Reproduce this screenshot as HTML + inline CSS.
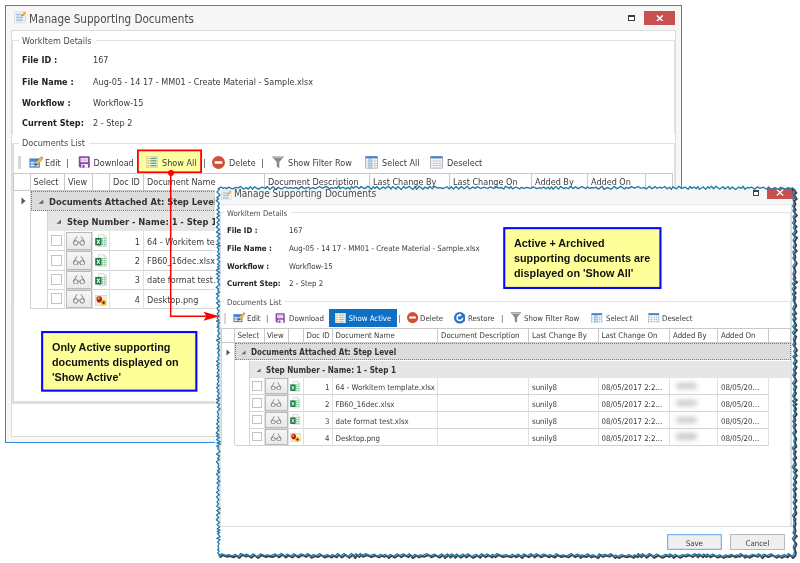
<!DOCTYPE html>
<html><head><meta charset="utf-8"><title>Manage Supporting Documents</title>
<style>
html,body{margin:0;padding:0;background:#fff;}
body{width:800px;height:563px;position:relative;overflow:hidden;font-family:'DejaVu Sans Condensed','Liberation Sans',sans-serif;}
#root{position:absolute;left:0;top:0;width:800px;height:563px;will-change:transform;}
.b{position:absolute;box-sizing:border-box;}
.t{position:absolute;white-space:nowrap;font-family:'DejaVu Sans Condensed','Liberation Sans',sans-serif;}
</style></head><body><div id="root">
<div class="b" style="left:5px;top:5px;width:677px;height:437.5px;border:1px solid #2f8bd9;background:#f7f7f7"></div>
<svg class="b" style="left:14.20px;top:11.20px" width="12.60" height="12.40" viewBox="0 0 17 16"><rect x="0.6" y="0.8" width="15" height="14.6" rx="1.2" fill="#f3f3f3" stroke="#d2d2d2" stroke-width="1"/><rect x="2.8" y="3.4" width="7" height="2.3" fill="#a6c3e6"/><rect x="2.8" y="7.2" width="9.4" height="2.3" fill="#a6c3e6"/><rect x="2.8" y="11" width="9.4" height="2.3" fill="#a6c3e6"/><path d="M10.2 6.6 L11 3.8 L14.6 0.2 L16.8 2.4 L13.2 6 Z" fill="#f2b040"/><path d="M10.2 6.6 L10.8 4.4 L12.4 6 Z" fill="#555"/></svg>
<div class="t" style="top:11.20px;font-size:11.6px;line-height:16px;color:#4a4a4a;left:29.00px;">Manage Supporting Documents</div>
<div class="b" style="left:627.50px;top:15.00px;width:7.50px;height:6.00px;border:1px solid #3c3c3c;border-top:2px solid #3c3c3c;box-sizing:border-box;background:#fff;"></div>
<div class="b" style="left:644.00px;top:11.00px;width:31.00px;height:14.00px;background:#c75050;"></div>
<svg class="b" style="left:656px;top:14.8px" width="7.6" height="6.6" viewBox="0 0 9 8" preserveAspectRatio="none"><path d="M1 0.5 L8 7.5 M8 0.5 L1 7.5" stroke="#fff" stroke-width="1.7"/></svg>
<div class="b" style="left:11.00px;top:30.00px;width:665.00px;height:407.00px;background:#fff;border:1px solid #dcdcdc;box-sizing:border-box;"></div>
<div class="b" style="left:12.00px;top:40.00px;width:663.00px;height:94.00px;border:1px solid #e2e2e2;border-bottom:none;box-sizing:border-box;"></div>
<div class="t" style="top:34.30px;font-size:9px;line-height:14px;color:#4a4a4a;left:19.00px;background:#fff;padding:0 4px 0 3px;">WorkItem Details</div>
<div class="t" style="top:53.20px;font-size:9px;line-height:14px;color:#222;left:22.00px;font-weight:bold;">File ID :</div>
<div class="t" style="top:53.20px;font-size:9px;line-height:14px;color:#3a3a3a;left:93.00px;">167</div>
<div class="t" style="top:74.80px;font-size:9px;line-height:14px;color:#222;left:22.00px;font-weight:bold;">File Name :</div>
<div class="t" style="top:74.80px;font-size:9px;line-height:14px;color:#3a3a3a;left:93.00px;">Aug-05 - 14 17 - MM01 - Create Material - Sample.xlsx</div>
<div class="t" style="top:96.00px;font-size:9px;line-height:14px;color:#222;left:22.00px;font-weight:bold;">Workflow :</div>
<div class="t" style="top:96.00px;font-size:9px;line-height:14px;color:#3a3a3a;left:93.00px;">Workflow-15</div>
<div class="t" style="top:115.60px;font-size:9px;line-height:14px;color:#222;left:22.00px;font-weight:bold;">Current Step:</div>
<div class="t" style="top:115.60px;font-size:9px;line-height:14px;color:#3a3a3a;left:93.00px;">2 - Step 2</div>
<div class="b" style="left:12.00px;top:143.00px;width:663.00px;height:261.00px;border:1px solid #e2e2e2;border-left:2px solid #dedede;border-bottom:3px solid #dedede;box-sizing:border-box;"></div>
<div class="t" style="top:135.90px;font-size:9px;line-height:14px;color:#4a4a4a;left:19.00px;background:#fff;padding:0 4px 0 3px;">Documents List</div>
<div class="b" style="left:18.40px;top:155.60px;width:2.20px;height:13.00px;background:#d6d6d6;"></div>
<svg class="b" style="left:28.50px;top:155.50px" width="14.50" height="13.00" viewBox="0 0 18 16"><defs><linearGradient id="ge" x1="0" y1="0" x2="0" y2="1"><stop offset="0" stop-color="#3f7fe0"/><stop offset="1" stop-color="#5d8fd0"/></linearGradient></defs><rect x="0.5" y="3" width="13" height="11.5" fill="url(#ge)"/><rect x="2" y="7" width="4" height="2.2" fill="#e8f0fb"/><rect x="7" y="7" width="5" height="2.2" fill="#e8f0fb"/><rect x="2" y="10.5" width="4" height="2.2" fill="#e8f0fb"/><rect x="7" y="10.5" width="5" height="2.2" fill="#e8f0fb"/><path d="M7.5 11.8 L8.2 8.6 L14 1.8 L16.6 4 L10.8 10.8 Z" fill="#f0c24a" stroke="#8a6a2a" stroke-width="0.5"/><path d="M14 1.8 L15.2 0.5 Q16.6 0.2 17.6 1.6 L17.8 2.6 L16.6 4 Z" fill="#e8847a"/><path d="M7.5 11.8 L8.2 8.6 L10.8 10.8 Z" fill="#3a3a3a"/></svg>
<div class="t" style="top:156.10px;font-size:9px;line-height:14px;color:#3a3a3a;left:45.00px;">Edit</div>
<div class="t" style="top:156.10px;font-size:9px;line-height:14px;color:#3a3a3a;left:66.00px;">|</div>
<svg class="b" style="left:77.60px;top:156.00px" width="12.50" height="12.50" viewBox="0 0 17 17"><path d="M1 1.5 Q1 0.5 2 0.5 L15 0.5 Q16 0.5 16 1.5 L16 15 Q16 16 15 16 L3 16 L1 14 Z" fill="#8e44ad"/><rect x="3.5" y="2.5" width="10" height="6" fill="#f3eef7"/><rect x="4.5" y="3.6" width="8" height="1.2" fill="#b9b9b9"/><rect x="4.5" y="6" width="8" height="1.2" fill="#b9b9b9"/><rect x="4.5" y="11" width="9" height="5" fill="#fff"/><rect x="6" y="12.2" width="3" height="3.8" fill="#8e44ad"/></svg>
<div class="t" style="top:156.10px;font-size:9px;line-height:14px;color:#3a3a3a;left:93.50px;">Download</div>
<svg class="b" style="left:0;top:0" width="800" height="563" viewBox="0 0 800 563"><rect x="137.90" y="150.40" width="63.20" height="21.90" fill="#ffffa3" stroke="#ff0000" stroke-width="1.8"/></svg>
<svg class="b" style="left:146.00px;top:156.00px" width="12.00" height="12.00" viewBox="0 0 16 16"><rect x="0.5" y="0.5" width="15" height="15" fill="#f5f0c8" stroke="#d8d3a6"/><rect x="2" y="2.1" width="2.4" height="2" fill="#f2c43c"/><rect x="6" y="2.4" width="8" height="1.4" fill="#3d8f88"/><rect x="2" y="5.3999999999999995" width="2.4" height="2" fill="#f2c43c"/><rect x="6" y="5.7" width="8" height="1.4" fill="#3d8f88"/><rect x="2" y="8.7" width="2.4" height="2" fill="#f2c43c"/><rect x="6" y="9.0" width="8" height="1.4" fill="#3d8f88"/><rect x="2" y="12.0" width="2.4" height="2" fill="#f2c43c"/><rect x="6" y="12.3" width="8" height="1.4" fill="#3d8f88"/></svg>
<div class="t" style="top:156.10px;font-size:9px;line-height:14px;color:#3a3a3a;left:162.00px;">Show All</div>
<div class="t" style="top:156.10px;font-size:9px;line-height:14px;color:#3a3a3a;left:203.00px;">|</div>
<svg class="b" style="left:212.20px;top:155.50px" width="13.00" height="13.00" viewBox="0 0 16 16"><circle cx="8" cy="8" r="8" fill="#cf5238"/><rect x="3.2" y="6.6" width="9.6" height="2.8" rx="0.6" fill="#fff"/></svg>
<div class="t" style="top:156.10px;font-size:9px;line-height:14px;color:#3a3a3a;left:229.00px;">Delete</div>
<div class="t" style="top:156.10px;font-size:9px;line-height:14px;color:#3a3a3a;left:261.00px;">|</div>
<svg class="b" style="left:271.00px;top:155.70px" width="14.00" height="13.00" viewBox="0 0 16 16"><path d="M0.5 0.5 L15.5 0.5 L9.6 7.5 L9.6 15 L6.4 13 L6.4 7.5 Z" fill="#8a8a8a"/><path d="M2.6 1.5 L13.4 1.5 L12.5 2.6 L3.5 2.6 Z" fill="#c9c9c9"/></svg>
<div class="t" style="top:156.10px;font-size:9px;line-height:14px;color:#3a3a3a;left:288.00px;">Show Filter Row</div>
<svg class="b" style="left:365.00px;top:156.00px" width="13.00" height="12.50" viewBox="0 0 16 16"><rect x="0.5" y="0.5" width="15" height="15" fill="#fff" stroke="#9aa3ad"/><rect x="0.5" y="0.5" width="15" height="2.6" fill="#3f7fd0"/><rect x="4.6" y="3.1" width="3.6" height="12.4" fill="#bfe0f6" stroke="#5aa0d8" stroke-width="0.6"/><rect x="4.4" y="3" width="0.8" height="12.5" fill="#b4bbc3"/><rect x="8.2" y="3" width="0.8" height="12.5" fill="#b4bbc3"/><rect x="12" y="3" width="0.8" height="12.5" fill="#b4bbc3"/><rect x="0.5" y="6" width="15" height="0.8" fill="#b4bbc3"/><rect x="0.5" y="9" width="15" height="0.8" fill="#b4bbc3"/><rect x="0.5" y="12" width="15" height="0.8" fill="#b4bbc3"/></svg>
<div class="t" style="top:156.10px;font-size:9px;line-height:14px;color:#3a3a3a;left:382.00px;">Select All</div>
<svg class="b" style="left:430.00px;top:156.00px" width="13.00" height="12.50" viewBox="0 0 16 16"><rect x="0.5" y="0.5" width="15" height="15" fill="#fff" stroke="#9aa3ad"/><rect x="0.5" y="0.5" width="15" height="2.6" fill="#3f7fd0"/><rect x="4.4" y="3" width="0.8" height="12.5" fill="#b4bbc3"/><rect x="8.2" y="3" width="0.8" height="12.5" fill="#b4bbc3"/><rect x="12" y="3" width="0.8" height="12.5" fill="#b4bbc3"/><rect x="0.5" y="6" width="15" height="0.8" fill="#b4bbc3"/><rect x="0.5" y="9" width="15" height="0.8" fill="#b4bbc3"/><rect x="0.5" y="12" width="15" height="0.8" fill="#b4bbc3"/></svg>
<div class="t" style="top:156.10px;font-size:9px;line-height:14px;color:#3a3a3a;left:447.00px;">Deselect</div>
<div class="b" style="left:12.50px;top:173.00px;width:660.50px;height:18.00px;border:1px solid #c9c9c9;box-sizing:border-box;background:#fff;"></div>
<div class="b" style="left:29.50px;top:174.00px;width:1.00px;height:16.00px;background:#c9c9c9;"></div>
<div class="b" style="left:63.50px;top:174.00px;width:1.00px;height:16.00px;background:#c9c9c9;"></div>
<div class="b" style="left:92.00px;top:174.00px;width:1.00px;height:16.00px;background:#c9c9c9;"></div>
<div class="b" style="left:109.00px;top:174.00px;width:1.00px;height:16.00px;background:#c9c9c9;"></div>
<div class="b" style="left:143.00px;top:174.00px;width:1.00px;height:16.00px;background:#c9c9c9;"></div>
<div class="b" style="left:264.00px;top:174.00px;width:1.00px;height:16.00px;background:#c9c9c9;"></div>
<div class="b" style="left:369.00px;top:174.00px;width:1.00px;height:16.00px;background:#c9c9c9;"></div>
<div class="b" style="left:449.00px;top:174.00px;width:1.00px;height:16.00px;background:#c9c9c9;"></div>
<div class="b" style="left:531.00px;top:174.00px;width:1.00px;height:16.00px;background:#c9c9c9;"></div>
<div class="b" style="left:587.00px;top:174.00px;width:1.00px;height:16.00px;background:#c9c9c9;"></div>
<div class="b" style="left:645.00px;top:174.00px;width:1.00px;height:16.00px;background:#c9c9c9;"></div>
<div class="t" style="top:174.90px;font-size:9px;line-height:14px;color:#3a3a3a;left:33.50px;">Select</div>
<div class="t" style="top:174.90px;font-size:9px;line-height:14px;color:#3a3a3a;left:68.00px;">View</div>
<div class="t" style="top:174.90px;font-size:9px;line-height:14px;color:#3a3a3a;left:113.00px;">Doc ID</div>
<div class="t" style="top:174.90px;font-size:9px;line-height:14px;color:#3a3a3a;left:147.00px;">Document Name</div>
<div class="t" style="top:174.90px;font-size:9px;line-height:14px;color:#3a3a3a;left:268.00px;">Document Description</div>
<div class="t" style="top:174.90px;font-size:9px;line-height:14px;color:#3a3a3a;left:373.00px;">Last Change By</div>
<div class="t" style="top:174.90px;font-size:9px;line-height:14px;color:#3a3a3a;left:453.00px;">Last Change On</div>
<div class="t" style="top:174.90px;font-size:9px;line-height:14px;color:#3a3a3a;left:535.00px;">Added By</div>
<div class="t" style="top:174.90px;font-size:9px;line-height:14px;color:#3a3a3a;left:591.00px;">Added On</div>
<div class="b" style="left:12.50px;top:190.00px;width:1.00px;height:119.00px;background:#d4d4d4;"></div>
<svg class="b" style="left:20.5px;top:197px" width="5" height="8" viewBox="0 0 5 8"><path d="M0.5 0.5 L4.5 4 L0.5 7.5 Z" fill="#555"/></svg>
<div class="b" style="left:29.50px;top:190.00px;width:1.00px;height:119.00px;background:#d4d4d4;"></div>
<div class="b" style="left:30.50px;top:191.00px;width:209.50px;height:19.50px;background:#dcdcdc;border-top:1px dotted #7d7d7d;border-bottom:1px dotted #7d7d7d;border-left:1px dotted #7d7d7d;box-sizing:border-box;"></div>
<svg class="b" style="left:38px;top:199.2px" width="5.8" height="5.3" viewBox="0 0 6 6" preserveAspectRatio="none"><path d="M5.5 0.5 L5.5 5.5 L0.5 5.5 Z" fill="#666"/></svg>
<div class="t" style="top:194.90px;font-size:9.3px;line-height:14px;color:#333;left:49.00px;font-weight:bold;">Documents Attached At: Step Level</div>
<div class="b" style="left:47.50px;top:211.00px;width:192.50px;height:20.00px;background:#e6e6e6;"></div>
<svg class="b" style="left:55.8px;top:219.3px" width="5.5" height="5.3" viewBox="0 0 6 6" preserveAspectRatio="none"><path d="M5.5 0.5 L5.5 5.5 L0.5 5.5 Z" fill="#666"/></svg>
<div class="t" style="top:215.10px;font-size:9.3px;line-height:14px;color:#333;left:67.00px;font-weight:bold;">Step Number - Name: 1 - Step 1</div>
<div class="b" style="left:47.00px;top:211.00px;width:1.00px;height:98.00px;background:#d4d4d4;"></div>
<div class="b" style="left:47.50px;top:250.00px;width:192.50px;height:1.00px;background:#d4d4d4;"></div>
<div class="b" style="left:63.50px;top:231.00px;width:1.00px;height:19.50px;background:#e0e0e0;"></div>
<div class="b" style="left:92.00px;top:231.00px;width:1.00px;height:19.50px;background:#e0e0e0;"></div>
<div class="b" style="left:109.00px;top:231.00px;width:1.00px;height:19.50px;background:#e0e0e0;"></div>
<div class="b" style="left:143.00px;top:231.00px;width:1.00px;height:19.50px;background:#e0e0e0;"></div>
<div class="b" style="left:51.00px;top:235.45px;width:11.00px;height:10.60px;border:1px solid #c4c4c4;background:#fff;box-sizing:border-box;"></div>
<div class="b" style="left:65.80px;top:231.60px;width:26.50px;height:18.70px;border:1px solid #b9b9b9;background:linear-gradient(#f6f6f6,#e9e9e9);box-sizing:border-box;"></div>
<svg class="b" style="left:72.00px;top:236.15px" width="14.00" height="9.60" viewBox="0 0 16 11"><circle cx="4.3" cy="7.9" r="2.6" fill="none" stroke="#777" stroke-width="1.05"/><circle cx="11.7" cy="7.9" r="2.6" fill="none" stroke="#777" stroke-width="1.05"/><path d="M6.9 7.4 Q8 6.5 9.1 7.4" fill="none" stroke="#777" stroke-width="1"/><path d="M1.9 6.6 L5.4 0.9" fill="none" stroke="#777" stroke-width="1.05" stroke-linecap="round"/><path d="M14.1 6.6 L10.6 0.9" fill="none" stroke="#777" stroke-width="1.05" stroke-linecap="round"/></svg>
<svg class="b" style="left:94.60px;top:234.15px" width="12.60" height="13.20" viewBox="0 0 16 16"><path d="M4.5 0.5 L11.5 0.5 L14.5 3.5 L14.5 15.5 L4.5 15.5 Z" fill="#fdfefd" stroke="#c3cfc6" stroke-width="0.9"/><path d="M11.5 0.5 L11.5 3.5 L14.5 3.5" fill="none" stroke="#c3cfc6" stroke-width="0.8"/><rect x="8.6" y="4.6" width="2.2" height="1.7" fill="#7cc792"/><rect x="11.4" y="4.6" width="2.2" height="1.7" fill="#7cc792"/><rect x="8.6" y="7.2" width="2.2" height="1.7" fill="#7cc792"/><rect x="11.4" y="7.2" width="2.2" height="1.7" fill="#7cc792"/><rect x="8.6" y="9.8" width="2.2" height="1.7" fill="#7cc792"/><rect x="11.4" y="9.8" width="2.2" height="1.7" fill="#7cc792"/><rect x="8.6" y="12.4" width="2.2" height="1.7" fill="#7cc792"/><rect x="11.4" y="12.4" width="2.2" height="1.7" fill="#7cc792"/><rect x="0.3" y="4.6" width="8" height="9.6" fill="#1d7744"/><path d="M2.5 6.8 L6.1 12 M6.1 6.8 L2.5 12" stroke="#fff" stroke-width="1.3"/></svg>
<div class="t" style="top:234.65px;font-size:9px;line-height:14px;color:#3a3a3a;right:660.00px;">1</div>
<div class="t" style="top:234.65px;font-size:9px;line-height:14px;color:#3a3a3a;left:147.00px;">64 - Workitem template.xlsx</div>
<div class="b" style="left:47.50px;top:269.50px;width:192.50px;height:1.00px;background:#d4d4d4;"></div>
<div class="b" style="left:63.50px;top:250.50px;width:1.00px;height:19.50px;background:#e0e0e0;"></div>
<div class="b" style="left:92.00px;top:250.50px;width:1.00px;height:19.50px;background:#e0e0e0;"></div>
<div class="b" style="left:109.00px;top:250.50px;width:1.00px;height:19.50px;background:#e0e0e0;"></div>
<div class="b" style="left:143.00px;top:250.50px;width:1.00px;height:19.50px;background:#e0e0e0;"></div>
<div class="b" style="left:51.00px;top:254.95px;width:11.00px;height:10.60px;border:1px solid #c4c4c4;background:#fff;box-sizing:border-box;"></div>
<div class="b" style="left:65.80px;top:251.10px;width:26.50px;height:18.70px;border:1px solid #b9b9b9;background:linear-gradient(#f6f6f6,#e9e9e9);box-sizing:border-box;"></div>
<svg class="b" style="left:72.00px;top:255.65px" width="14.00" height="9.60" viewBox="0 0 16 11"><circle cx="4.3" cy="7.9" r="2.6" fill="none" stroke="#777" stroke-width="1.05"/><circle cx="11.7" cy="7.9" r="2.6" fill="none" stroke="#777" stroke-width="1.05"/><path d="M6.9 7.4 Q8 6.5 9.1 7.4" fill="none" stroke="#777" stroke-width="1"/><path d="M1.9 6.6 L5.4 0.9" fill="none" stroke="#777" stroke-width="1.05" stroke-linecap="round"/><path d="M14.1 6.6 L10.6 0.9" fill="none" stroke="#777" stroke-width="1.05" stroke-linecap="round"/></svg>
<svg class="b" style="left:94.60px;top:253.65px" width="12.60" height="13.20" viewBox="0 0 16 16"><path d="M4.5 0.5 L11.5 0.5 L14.5 3.5 L14.5 15.5 L4.5 15.5 Z" fill="#fdfefd" stroke="#c3cfc6" stroke-width="0.9"/><path d="M11.5 0.5 L11.5 3.5 L14.5 3.5" fill="none" stroke="#c3cfc6" stroke-width="0.8"/><rect x="8.6" y="4.6" width="2.2" height="1.7" fill="#7cc792"/><rect x="11.4" y="4.6" width="2.2" height="1.7" fill="#7cc792"/><rect x="8.6" y="7.2" width="2.2" height="1.7" fill="#7cc792"/><rect x="11.4" y="7.2" width="2.2" height="1.7" fill="#7cc792"/><rect x="8.6" y="9.8" width="2.2" height="1.7" fill="#7cc792"/><rect x="11.4" y="9.8" width="2.2" height="1.7" fill="#7cc792"/><rect x="8.6" y="12.4" width="2.2" height="1.7" fill="#7cc792"/><rect x="11.4" y="12.4" width="2.2" height="1.7" fill="#7cc792"/><rect x="0.3" y="4.6" width="8" height="9.6" fill="#1d7744"/><path d="M2.5 6.8 L6.1 12 M6.1 6.8 L2.5 12" stroke="#fff" stroke-width="1.3"/></svg>
<div class="t" style="top:254.15px;font-size:9px;line-height:14px;color:#3a3a3a;right:660.00px;">2</div>
<div class="t" style="top:254.15px;font-size:9px;line-height:14px;color:#3a3a3a;left:147.00px;">FB60_16dec.xlsx</div>
<div class="b" style="left:47.50px;top:288.50px;width:192.50px;height:1.00px;background:#d4d4d4;"></div>
<div class="b" style="left:63.50px;top:270.00px;width:1.00px;height:19.00px;background:#e0e0e0;"></div>
<div class="b" style="left:92.00px;top:270.00px;width:1.00px;height:19.00px;background:#e0e0e0;"></div>
<div class="b" style="left:109.00px;top:270.00px;width:1.00px;height:19.00px;background:#e0e0e0;"></div>
<div class="b" style="left:143.00px;top:270.00px;width:1.00px;height:19.00px;background:#e0e0e0;"></div>
<div class="b" style="left:51.00px;top:274.20px;width:11.00px;height:10.60px;border:1px solid #c4c4c4;background:#fff;box-sizing:border-box;"></div>
<div class="b" style="left:65.80px;top:270.60px;width:26.50px;height:18.20px;border:1px solid #b9b9b9;background:linear-gradient(#f6f6f6,#e9e9e9);box-sizing:border-box;"></div>
<svg class="b" style="left:72.00px;top:274.90px" width="14.00" height="9.60" viewBox="0 0 16 11"><circle cx="4.3" cy="7.9" r="2.6" fill="none" stroke="#777" stroke-width="1.05"/><circle cx="11.7" cy="7.9" r="2.6" fill="none" stroke="#777" stroke-width="1.05"/><path d="M6.9 7.4 Q8 6.5 9.1 7.4" fill="none" stroke="#777" stroke-width="1"/><path d="M1.9 6.6 L5.4 0.9" fill="none" stroke="#777" stroke-width="1.05" stroke-linecap="round"/><path d="M14.1 6.6 L10.6 0.9" fill="none" stroke="#777" stroke-width="1.05" stroke-linecap="round"/></svg>
<svg class="b" style="left:94.60px;top:272.90px" width="12.60" height="13.20" viewBox="0 0 16 16"><path d="M4.5 0.5 L11.5 0.5 L14.5 3.5 L14.5 15.5 L4.5 15.5 Z" fill="#fdfefd" stroke="#c3cfc6" stroke-width="0.9"/><path d="M11.5 0.5 L11.5 3.5 L14.5 3.5" fill="none" stroke="#c3cfc6" stroke-width="0.8"/><rect x="8.6" y="4.6" width="2.2" height="1.7" fill="#7cc792"/><rect x="11.4" y="4.6" width="2.2" height="1.7" fill="#7cc792"/><rect x="8.6" y="7.2" width="2.2" height="1.7" fill="#7cc792"/><rect x="11.4" y="7.2" width="2.2" height="1.7" fill="#7cc792"/><rect x="8.6" y="9.8" width="2.2" height="1.7" fill="#7cc792"/><rect x="11.4" y="9.8" width="2.2" height="1.7" fill="#7cc792"/><rect x="8.6" y="12.4" width="2.2" height="1.7" fill="#7cc792"/><rect x="11.4" y="12.4" width="2.2" height="1.7" fill="#7cc792"/><rect x="0.3" y="4.6" width="8" height="9.6" fill="#1d7744"/><path d="M2.5 6.8 L6.1 12 M6.1 6.8 L2.5 12" stroke="#fff" stroke-width="1.3"/></svg>
<div class="t" style="top:273.40px;font-size:9px;line-height:14px;color:#3a3a3a;right:660.00px;">3</div>
<div class="t" style="top:273.40px;font-size:9px;line-height:14px;color:#3a3a3a;left:147.00px;">date format test.xlsx</div>
<div class="b" style="left:30.00px;top:308.00px;width:210.00px;height:1.00px;background:#d4d4d4;"></div>
<div class="b" style="left:63.50px;top:289.00px;width:1.00px;height:19.50px;background:#e0e0e0;"></div>
<div class="b" style="left:92.00px;top:289.00px;width:1.00px;height:19.50px;background:#e0e0e0;"></div>
<div class="b" style="left:109.00px;top:289.00px;width:1.00px;height:19.50px;background:#e0e0e0;"></div>
<div class="b" style="left:143.00px;top:289.00px;width:1.00px;height:19.50px;background:#e0e0e0;"></div>
<div class="b" style="left:51.00px;top:293.45px;width:11.00px;height:10.60px;border:1px solid #c4c4c4;background:#fff;box-sizing:border-box;"></div>
<div class="b" style="left:65.80px;top:289.60px;width:26.50px;height:18.70px;border:1px solid #b9b9b9;background:linear-gradient(#f6f6f6,#e9e9e9);box-sizing:border-box;"></div>
<svg class="b" style="left:72.00px;top:294.15px" width="14.00" height="9.60" viewBox="0 0 16 11"><circle cx="4.3" cy="7.9" r="2.6" fill="none" stroke="#777" stroke-width="1.05"/><circle cx="11.7" cy="7.9" r="2.6" fill="none" stroke="#777" stroke-width="1.05"/><path d="M6.9 7.4 Q8 6.5 9.1 7.4" fill="none" stroke="#777" stroke-width="1"/><path d="M1.9 6.6 L5.4 0.9" fill="none" stroke="#777" stroke-width="1.05" stroke-linecap="round"/><path d="M14.1 6.6 L10.6 0.9" fill="none" stroke="#777" stroke-width="1.05" stroke-linecap="round"/></svg>
<svg class="b" style="left:94.60px;top:293.75px" width="12.60" height="12.40" viewBox="0 0 16 16"><rect x="0.5" y="2" width="15" height="12.5" fill="#f7efd4" stroke="#d8ccA0" stroke-width="0.8"/><path d="M2 4 Q5 1.8 8.2 3.6 Q9.6 6.5 8.4 9.6 Q6 12 3 10.6 Q1.2 7.5 2 4 Z" fill="#b3201c"/><circle cx="4.6" cy="5.6" r="1.4" fill="#f0c428"/><circle cx="11" cy="11" r="3.3" fill="#f2a818"/><circle cx="11" cy="11.2" r="1.4" fill="#2c1c08"/></svg>
<div class="t" style="top:292.65px;font-size:9px;line-height:14px;color:#3a3a3a;right:660.00px;">4</div>
<div class="t" style="top:292.65px;font-size:9px;line-height:14px;color:#3a3a3a;left:147.00px;">Desktop.png</div>
<svg class="b" style="left:0;top:0" width="800" height="563" viewBox="0 0 800 563"><rect x="42.15" y="332.05" width="154.20" height="58.60" fill="#ffff99" stroke="#0808ff" stroke-width="2.1"/></svg>
<div class="t" style="left:52.40px;top:339.54px;font-size:10.0px;line-height:16px;color:#111;font-weight:bold;font-family:'Liberation Sans',sans-serif;transform:scaleX(1.08);transform-origin:0 0;">Only Active supporting</div>
<div class="t" style="left:52.40px;top:354.64px;font-size:10.0px;line-height:16px;color:#111;font-weight:bold;font-family:'Liberation Sans',sans-serif;transform:scaleX(1.08);transform-origin:0 0;">documents displayed on</div>
<div class="t" style="left:52.40px;top:370.04px;font-size:10.0px;line-height:16px;color:#111;font-weight:bold;font-family:'Liberation Sans',sans-serif;transform:scaleX(1.08);transform-origin:0 0;">'Show Active'</div>
<div class="b" style="left:214.50px;top:189.00px;width:4.50px;height:364.00px;background:#fff;"></div>
<div class="b" style="left:0;top:0;width:800px;height:563px;background:#fff;clip-path:polygon(218.2px 188.6px,221.3px 187.2px,223.6px 188.3px,225.1px 187.5px,226.7px 188.8px,228.4px 187.1px,232.3px 188.9px,236.2px 187.3px,238.3px 188.0px,240.5px 186.4px,243.4px 189.0px,246.2px 187.6px,248.2px 189.0px,250.4px 186.7px,252.5px 189.2px,254.5px 186.7px,258.2px 189.1px,262.2px 187.2px,265.5px 188.5px,267.0px 186.6px,269.9px 189.3px,273.1px 186.7px,275.6px 189.2px,278.3px 187.4px,281.5px 189.0px,285.0px 187.0px,288.1px 188.3px,290.0px 187.6px,293.4px 188.4px,295.8px 187.4px,298.3px 188.9px,301.8px 186.4px,304.3px 188.7px,308.2px 187.2px,310.2px 188.5px,313.1px 187.6px,315.6px 188.7px,319.4px 186.5px,322.4px 188.2px,326.2px 186.4px,329.6px 188.7px,331.3px 187.4px,332.8px 188.5px,335.1px 187.6px,336.9px 188.4px,338.3px 186.3px,340.1px 188.6px,342.4px 187.2px,346.4px 188.8px,348.0px 187.2px,350.1px 189.2px,351.5px 186.3px,353.3px 188.1px,356.0px 186.2px,359.2px 188.6px,361.0px 186.5px,364.5px 188.6px,368.0px 186.2px,371.5px 189.2px,373.4px 186.7px,374.9px 188.3px,376.9px 186.5px,379.5px 189.3px,383.4px 186.9px,385.3px 188.5px,388.4px 186.3px,391.0px 189.0px,392.6px 186.6px,396.0px 189.1px,397.9px 186.4px,401.3px 189.4px,403.8px 186.3px,405.6px 188.4px,409.3px 186.4px,412.9px 189.4px,415.2px 186.7px,416.6px 189.4px,419.3px 186.3px,423.0px 189.2px,425.0px 187.0px,428.0px 188.6px,429.7px 186.3px,432.3px 188.9px,434.7px 186.3px,437.5px 188.1px,440.0px 187.6px,443.5px 188.5px,446.8px 186.7px,449.5px 188.9px,451.2px 186.7px,453.3px 189.1px,456.1px 186.5px,458.7px 189.0px,461.4px 186.5px,464.2px 188.8px,467.4px 186.3px,469.4px 188.9px,473.0px 187.2px,475.5px 188.4px,477.1px 186.6px,480.8px 188.5px,483.9px 187.2px,487.9px 188.5px,490.3px 186.8px,493.8px 188.5px,496.6px 186.9px,498.8px 188.2px,501.6px 187.5px,503.9px 189.0px,505.4px 186.2px,509.3px 188.4px,510.8px 186.4px,512.5px 188.8px,516.0px 187.0px,519.8px 188.9px,521.4px 187.3px,523.9px 188.4px,527.0px 187.4px,530.6px 188.4px,533.2px 186.9px,537.0px 188.6px,539.7px 187.6px,541.5px 188.3px,543.7px 187.0px,545.9px 188.8px,548.1px 187.3px,549.6px 189.1px,551.4px 186.8px,553.1px 189.2px,555.8px 186.4px,558.5px 189.1px,560.7px 186.4px,563.8px 188.7px,565.3px 187.6px,568.6px 188.6px,570.2px 186.4px,573.4px 188.6px,575.5px 186.8px,578.0px 188.6px,582.0px 186.7px,585.9px 188.6px,587.3px 186.9px,590.0px 188.5px,591.3px 187.6px,593.8px 188.0px,595.9px 187.1px,598.7px 189.1px,602.0px 186.3px,604.2px 189.4px,607.5px 187.4px,611.0px 189.3px,614.3px 186.4px,617.1px 188.8px,620.6px 186.4px,624.3px 189.0px,626.3px 187.3px,628.6px 188.4px,631.4px 186.6px,634.6px 188.1px,638.1px 186.5px,640.8px 188.2px,644.2px 187.6px,646.2px 189.1px,649.5px 186.2px,651.9px 188.8px,655.3px 186.6px,656.9px 188.4px,660.2px 187.0px,661.6px 188.3px,664.8px 186.5px,666.9px 188.9px,669.5px 187.2px,671.4px 189.4px,672.8px 186.8px,676.7px 188.8px,678.7px 186.3px,681.6px 188.4px,685.4px 187.2px,688.1px 189.3px,690.1px 186.3px,691.6px 188.3px,694.1px 187.0px,696.4px 188.6px,697.8px 186.5px,699.5px 189.3px,703.2px 187.0px,705.6px 189.4px,707.9px 186.8px,709.4px 188.4px,711.6px 186.3px,713.6px 188.9px,716.0px 186.2px,719.5px 189.0px,723.3px 186.7px,724.9px 189.1px,728.2px 186.6px,729.7px 189.3px,732.3px 186.9px,735.6px 189.4px,738.7px 187.0px,741.1px 188.5px,743.1px 186.3px,745.0px 189.3px,747.6px 187.2px,749.2px 188.1px,751.2px 187.0px,754.9px 189.1px,757.4px 186.7px,759.6px 188.3px,763.5px 187.2px,766.6px 189.2px,768.6px 187.0px,771.2px 189.3px,774.9px 187.6px,778.1px 189.3px,781.0px 187.3px,784.8px 189.2px,788.7px 187.6px,790.5px 188.9px,792.5px 187.8px,795.0px 191.6px,792.4px 193.2px,795.3px 197.5px,793.0px 199.4px,794.1px 203.0px,792.6px 206.1px,794.3px 208.3px,792.8px 210.7px,795.6px 214.1px,793.0px 216.4px,794.2px 220.0px,792.5px 223.0px,795.3px 225.3px,793.3px 227.5px,795.3px 230.3px,792.4px 234.1px,795.7px 236.3px,793.1px 240.2px,794.8px 244.0px,793.1px 247.0px,795.3px 249.8px,792.9px 251.8px,794.1px 256.2px,792.9px 257.9px,795.4px 262.0px,792.9px 266.3px,794.3px 270.6px,792.9px 274.1px,794.1px 276.6px,792.9px 279.0px,795.7px 280.9px,792.3px 283.4px,794.5px 286.3px,792.2px 288.9px,794.4px 291.5px,792.3px 294.3px,794.1px 295.9px,793.0px 300.2px,794.9px 304.3px,792.6px 308.7px,794.8px 312.3px,792.4px 313.9px,794.4px 317.3px,792.8px 319.5px,794.9px 323.9px,792.7px 326.7px,795.5px 328.7px,792.4px 332.7px,794.8px 335.2px,793.3px 339.1px,794.2px 342.8px,792.7px 344.4px,795.6px 348.9px,793.7px 351.2px,795.3px 354.2px,792.8px 356.4px,795.4px 359.9px,793.2px 363.4px,795.2px 365.8px,793.1px 369.5px,794.6px 371.8px,792.9px 375.1px,795.1px 379.5px,792.5px 383.4px,795.0px 385.3px,793.4px 389.3px,794.6px 391.7px,792.6px 396.1px,795.5px 398.7px,792.4px 401.0px,795.2px 402.9px,792.9px 405.1px,794.8px 407.2px,793.7px 410.6px,795.3px 413.1px,793.1px 415.6px,794.1px 418.8px,792.7px 421.5px,794.6px 423.3px,793.0px 426.0px,794.8px 430.4px,792.8px 432.9px,794.9px 437.4px,793.7px 441.1px,795.0px 445.3px,792.2px 448.0px,794.5px 450.0px,793.4px 453.5px,794.9px 456.8px,793.0px 458.8px,794.6px 463.1px,792.1px 467.0px,795.6px 468.9px,793.3px 471.8px,795.6px 474.5px,793.2px 478.5px,794.9px 480.7px,793.1px 484.7px,795.1px 487.4px,793.0px 489.3px,794.5px 493.4px,793.3px 497.2px,795.2px 499.1px,793.0px 502.5px,795.0px 505.7px,793.6px 508.6px,795.1px 512.0px,792.4px 515.7px,794.2px 517.8px,793.6px 519.7px,794.3px 522.6px,793.3px 526.0px,794.3px 529.8px,792.9px 532.8px,795.5px 534.8px,792.3px 538.5px,795.1px 542.9px,793.2px 547.1px,794.5px 551.4px,793.9px 554.4px,791.6px 556.6px,788.5px 553.5px,786.2px 556.2px,784.6px 554.4px,780.3px 556.4px,778.2px 554.7px,775.1px 556.4px,771.0px 553.9px,766.9px 555.7px,763.5px 554.1px,761.2px 556.8px,758.6px 553.7px,756.5px 555.5px,752.6px 554.3px,748.2px 556.3px,745.7px 554.9px,743.7px 556.3px,740.7px 553.5px,738.5px 555.5px,736.9px 554.8px,734.3px 555.9px,731.0px 554.3px,728.1px 555.8px,725.9px 554.9px,722.4px 556.6px,719.7px 554.9px,716.3px 556.3px,712.8px 554.1px,709.1px 555.9px,707.5px 554.0px,705.2px 555.7px,703.7px 553.9px,701.7px 555.8px,698.7px 553.8px,696.6px 556.0px,694.9px 553.5px,691.3px 555.6px,687.6px 554.0px,684.7px 555.3px,682.5px 554.5px,678.7px 556.4px,675.1px 554.3px,672.3px 556.5px,670.0px 553.8px,667.8px 555.6px,665.5px 554.3px,661.2px 556.5px,657.0px 554.2px,652.8px 556.4px,649.3px 553.4px,645.3px 556.4px,642.5px 553.7px,640.0px 555.9px,638.3px 553.5px,636.7px 555.7px,634.1px 554.9px,632.4px 556.4px,628.8px 554.7px,625.6px 556.0px,621.6px 554.6px,617.5px 556.7px,615.7px 554.9px,614.0px 556.6px,610.6px 553.6px,608.2px 555.3px,604.5px 554.3px,601.7px 555.6px,599.3px 553.7px,596.8px 556.8px,592.8px 554.7px,590.0px 556.1px,587.5px 553.8px,585.3px 555.6px,581.4px 554.9px,579.2px 556.5px,577.7px 554.0px,573.8px 555.8px,571.2px 553.6px,566.9px 555.9px,563.3px 554.8px,559.9px 555.7px,556.3px 553.7px,553.7px 556.1px,549.6px 554.5px,548.0px 555.9px,543.8px 554.0px,539.6px 555.9px,536.5px 553.7px,533.1px 556.0px,531.1px 553.6px,527.4px 555.8px,523.6px 553.9px,520.7px 556.7px,518.5px 554.2px,514.5px 555.8px,512.3px 554.2px,510.2px 556.0px,505.8px 554.7px,501.5px 555.7px,497.0px 553.6px,494.2px 555.8px,492.4px 554.3px,490.7px 556.1px,487.1px 554.0px,484.2px 555.8px,481.5px 553.7px,478.7px 556.3px,475.9px 554.3px,471.8px 556.5px,467.8px 553.8px,464.9px 556.0px,463.1px 554.1px,459.4px 556.4px,456.6px 554.0px,453.9px 556.4px,451.8px 553.8px,449.1px 556.2px,447.5px 553.9px,443.6px 556.7px,441.8px 553.9px,438.2px 556.2px,434.2px 554.0px,429.9px 555.9px,427.2px 553.7px,422.7px 555.4px,420.4px 554.8px,417.6px 556.1px,415.0px 554.3px,411.3px 556.7px,409.1px 553.6px,407.0px 555.8px,403.0px 553.8px,399.9px 555.9px,397.3px 553.8px,393.3px 556.2px,390.2px 554.4px,387.6px 556.6px,385.0px 554.3px,382.9px 555.6px,380.5px 554.3px,377.5px 556.1px,374.1px 554.2px,370.0px 555.7px,365.8px 553.7px,361.8px 555.5px,360.3px 553.5px,358.0px 555.7px,355.8px 553.7px,353.8px 556.7px,351.7px 553.5px,347.9px 556.4px,344.0px 553.6px,340.5px 556.2px,337.6px 553.5px,335.3px 555.9px,332.3px 554.5px,330.4px 556.2px,327.2px 554.6px,323.2px 556.2px,319.7px 553.6px,317.0px 555.6px,313.5px 554.7px,310.2px 556.4px,307.7px 553.4px,304.7px 555.6px,301.1px 553.8px,297.0px 556.0px,293.9px 553.7px,291.1px 556.1px,287.1px 554.2px,284.4px 556.2px,281.4px 553.4px,277.5px 556.0px,275.1px 553.9px,271.2px 555.7px,267.1px 554.8px,264.7px 555.6px,260.4px 553.9px,256.6px 556.7px,253.2px 553.8px,249.9px 556.4px,246.4px 554.0px,244.6px 555.3px,240.8px 553.5px,238.1px 556.6px,234.9px 554.3px,232.2px 556.0px,228.7px 554.6px,225.5px 555.3px,221.6px 553.9px,218.8px 555.6px,220.1px 555.1px,217.8px 553.2px,219.1px 550.9px,217.6px 549.8px,218.8px 548.6px,218.0px 545.9px,219.1px 543.5px,217.5px 542.1px,220.0px 539.7px,216.7px 538.5px,220.1px 536.6px,217.7px 533.7px,219.7px 532.7px,217.2px 531.5px,220.0px 530.1px,217.1px 529.0px,219.7px 527.1px,217.1px 524.6px,219.4px 522.3px,216.3px 519.8px,218.5px 517.7px,216.6px 514.8px,219.6px 513.1px,216.8px 510.5px,220.0px 508.6px,216.8px 506.3px,218.5px 503.7px,217.0px 502.1px,218.8px 499.5px,216.5px 496.9px,219.2px 494.8px,216.6px 492.2px,218.9px 490.5px,217.3px 487.9px,219.1px 485.1px,216.9px 482.8px,219.9px 481.3px,217.5px 479.4px,219.1px 476.8px,216.4px 474.1px,219.6px 472.1px,217.3px 470.7px,219.6px 469.0px,218.0px 467.0px,218.5px 464.0px,216.5px 461.8px,219.3px 459.6px,217.6px 458.6px,219.5px 455.9px,216.5px 454.3px,219.9px 451.5px,217.9px 448.6px,218.5px 447.2px,216.8px 446.1px,220.1px 444.2px,216.8px 443.0px,220.1px 441.8px,216.7px 439.7px,219.4px 437.3px,216.2px 436.0px,218.9px 434.6px,216.3px 432.9px,218.9px 430.2px,216.7px 427.8px,219.0px 426.7px,216.7px 423.8px,218.7px 421.7px,217.2px 420.0px,219.0px 418.1px,217.7px 416.8px,218.5px 414.4px,217.3px 411.6px,220.0px 408.9px,217.5px 407.0px,219.7px 404.3px,216.4px 402.6px,219.0px 400.4px,216.6px 399.3px,220.0px 398.0px,217.4px 396.2px,219.3px 393.5px,217.2px 391.5px,218.8px 390.3px,216.7px 387.5px,219.2px 385.6px,217.1px 384.2px,218.8px 381.2px,217.6px 379.7px,219.2px 377.2px,216.5px 376.2px,218.8px 374.9px,217.3px 372.8px,219.1px 370.1px,217.3px 368.8px,218.5px 366.4px,216.7px 365.2px,219.1px 363.6px,216.5px 361.2px,218.9px 359.8px,217.7px 358.0px,219.3px 355.4px,217.8px 352.7px,219.5px 349.9px,217.3px 348.4px,219.0px 346.7px,217.6px 344.5px,219.5px 342.6px,216.5px 340.2px,219.8px 338.6px,217.5px 336.1px,219.5px 333.2px,217.8px 331.2px,219.1px 328.3px,217.2px 327.1px,218.9px 326.0px,217.6px 324.6px,219.5px 322.5px,216.4px 321.2px,219.0px 320.1px,217.2px 318.1px,219.0px 316.3px,217.4px 313.7px,219.0px 311.2px,217.1px 308.3px,219.5px 305.7px,216.5px 302.8px,219.3px 301.4px,216.5px 298.4px,218.7px 295.8px,216.3px 293.8px,219.4px 292.3px,217.8px 290.6px,218.6px 288.7px,216.2px 287.4px,219.7px 284.6px,217.6px 281.9px,219.2px 279.6px,216.8px 278.1px,219.2px 275.8px,216.3px 274.0px,219.7px 272.4px,216.3px 270.2px,219.5px 268.7px,217.4px 267.3px,219.4px 265.8px,217.5px 264.3px,219.7px 261.6px,217.3px 259.3px,219.6px 257.4px,217.2px 255.5px,219.5px 254.1px,217.6px 251.9px,219.1px 249.2px,217.2px 247.2px,219.9px 245.6px,216.4px 244.5px,219.3px 243.4px,217.4px 240.9px,219.8px 238.0px,217.1px 236.4px,220.0px 234.1px,216.6px 232.1px,219.5px 229.6px,216.3px 227.2px,218.8px 224.5px,216.9px 222.4px,219.4px 220.2px,216.7px 217.5px,219.4px 215.6px,217.1px 214.0px,219.3px 212.3px,216.9px 209.6px,219.2px 208.2px,217.8px 206.1px,219.3px 203.3px,216.3px 200.6px,218.8px 198.8px,216.8px 197.7px,219.9px 194.9px,216.9px 191.9px,219.3px 189.6px);">
<div class="b" style="left:210.00px;top:180.00px;width:590.00px;height:24.00px;background:#f7f7f7;"></div>
<svg class="b" style="left:221.00px;top:189.60px" width="10.80" height="10.60" viewBox="0 0 17 16"><rect x="0.6" y="0.8" width="15" height="14.6" rx="1.2" fill="#f3f3f3" stroke="#d2d2d2" stroke-width="1"/><rect x="2.8" y="3.4" width="7" height="2.3" fill="#a6c3e6"/><rect x="2.8" y="7.2" width="9.4" height="2.3" fill="#a6c3e6"/><rect x="2.8" y="11" width="9.4" height="2.3" fill="#a6c3e6"/><path d="M10.2 6.6 L11 3.8 L14.6 0.2 L16.8 2.4 L13.2 6 Z" fill="#f2b040"/><path d="M10.2 6.6 L10.8 4.4 L12.4 6 Z" fill="#555"/></svg>
<div class="t" style="top:186.80px;font-size:10px;line-height:14px;color:#4a4a4a;left:234.00px;">Manage Supporting Documents</div>
<div class="b" style="left:752.60px;top:190.20px;width:6.80px;height:5.80px;border:1px solid #444;border-top:2px solid #444;box-sizing:border-box;background:#fff;"></div>
<div class="b" style="left:766.50px;top:180.00px;width:33.50px;height:18.70px;background:#c75050;"></div>
<svg class="b" style="left:776px;top:189.3px" width="8" height="7" viewBox="0 0 8 7"><path d="M0.8 0.5 L7.2 6.5 M7.2 0.5 L0.8 6.5" stroke="#fff" stroke-width="1.3"/></svg>
<div class="b" style="left:219.00px;top:204.00px;width:572.50px;height:322.50px;background:#fff;border:1px solid #dedede;border-top-color:#e9e9e9;box-sizing:border-box;"></div>
<div class="b" style="left:219.50px;top:212.00px;width:571.50px;height:81.00px;border:1px solid #e2e2e2;border-bottom:none;box-sizing:border-box;"></div>
<div class="t" style="top:207.80px;font-size:7.8px;line-height:12px;color:#4a4a4a;left:224.00px;background:#fff;padding:0 4px 0 3px;">WorkItem Details</div>
<div class="t" style="top:224.55px;font-size:7.8px;line-height:12px;color:#222;left:227.00px;font-weight:bold;">File ID :</div>
<div class="t" style="top:224.55px;font-size:7.8px;line-height:12px;color:#3a3a3a;left:289.00px;">167</div>
<div class="t" style="top:242.95px;font-size:7.8px;line-height:12px;color:#222;left:227.00px;font-weight:bold;">File Name :</div>
<div class="t" style="top:242.95px;font-size:7.8px;line-height:12px;color:#3a3a3a;left:289.00px;">Aug-05 - 14 17 - MM01 - Create Material - Sample.xlsx</div>
<div class="t" style="top:261.30px;font-size:7.8px;line-height:12px;color:#222;left:227.00px;font-weight:bold;">Workflow :</div>
<div class="t" style="top:261.30px;font-size:7.8px;line-height:12px;color:#3a3a3a;left:289.00px;">Workflow-15</div>
<div class="t" style="top:278.30px;font-size:7.8px;line-height:12px;color:#222;left:227.00px;font-weight:bold;">Current Step:</div>
<div class="t" style="top:278.30px;font-size:7.8px;line-height:12px;color:#3a3a3a;left:289.00px;">2 - Step 2</div>
<div class="b" style="left:219.50px;top:301.00px;width:571.50px;height:225.00px;border:1px solid #e2e2e2;border-bottom:none;box-sizing:border-box;"></div>
<div class="t" style="top:296.55px;font-size:7.8px;line-height:12px;color:#4a4a4a;left:224.00px;background:#fff;padding:0 4px 0 3px;">Documents List</div>
<div class="b" style="left:224.00px;top:312.50px;width:2.20px;height:11.00px;background:#d6d6d6;"></div>
<svg class="b" style="left:232.50px;top:312.00px" width="12.60" height="11.30" viewBox="0 0 18 16"><defs><linearGradient id="ge" x1="0" y1="0" x2="0" y2="1"><stop offset="0" stop-color="#3f7fe0"/><stop offset="1" stop-color="#5d8fd0"/></linearGradient></defs><rect x="0.5" y="3" width="13" height="11.5" fill="url(#ge)"/><rect x="2" y="7" width="4" height="2.2" fill="#e8f0fb"/><rect x="7" y="7" width="5" height="2.2" fill="#e8f0fb"/><rect x="2" y="10.5" width="4" height="2.2" fill="#e8f0fb"/><rect x="7" y="10.5" width="5" height="2.2" fill="#e8f0fb"/><path d="M7.5 11.8 L8.2 8.6 L14 1.8 L16.6 4 L10.8 10.8 Z" fill="#f0c24a" stroke="#8a6a2a" stroke-width="0.5"/><path d="M14 1.8 L15.2 0.5 Q16.6 0.2 17.6 1.6 L17.8 2.6 L16.6 4 Z" fill="#e8847a"/><path d="M7.5 11.8 L8.2 8.6 L10.8 10.8 Z" fill="#3a3a3a"/></svg>
<div class="t" style="top:313.30px;font-size:7.8px;line-height:12px;color:#3a3a3a;left:247.00px;">Edit</div>
<div class="t" style="top:313.30px;font-size:7.8px;line-height:12px;color:#3a3a3a;left:266.00px;">|</div>
<svg class="b" style="left:275.00px;top:312.70px" width="10.40" height="10.40" viewBox="0 0 17 17"><path d="M1 1.5 Q1 0.5 2 0.5 L15 0.5 Q16 0.5 16 1.5 L16 15 Q16 16 15 16 L3 16 L1 14 Z" fill="#8e44ad"/><rect x="3.5" y="2.5" width="10" height="6" fill="#f3eef7"/><rect x="4.5" y="3.6" width="8" height="1.2" fill="#b9b9b9"/><rect x="4.5" y="6" width="8" height="1.2" fill="#b9b9b9"/><rect x="4.5" y="11" width="9" height="5" fill="#fff"/><rect x="6" y="12.2" width="3" height="3.8" fill="#8e44ad"/></svg>
<div class="t" style="top:313.30px;font-size:7.8px;line-height:12px;color:#3a3a3a;left:289.00px;">Download</div>
<div class="b" style="left:329.00px;top:308.80px;width:68.30px;height:18.40px;background:#0e70c4;"></div>
<svg class="b" style="left:335.00px;top:312.50px" width="10.80" height="10.80" viewBox="0 0 16 16"><rect x="0.5" y="0.5" width="15" height="15" fill="#f8f4e6" stroke="#e6e0cc"/><rect x="2" y="2.1" width="2.4" height="2" fill="#f2c43c"/><rect x="6" y="2.4" width="8" height="1.4" fill="#8db7e6"/><rect x="2" y="5.3999999999999995" width="2.4" height="2" fill="#f2c43c"/><rect x="6" y="5.7" width="8" height="1.4" fill="#8db7e6"/><rect x="2" y="8.7" width="2.4" height="2" fill="#f2c43c"/><rect x="6" y="9.0" width="8" height="1.4" fill="#8db7e6"/><rect x="2" y="12.0" width="2.4" height="2" fill="#f2c43c"/><rect x="6" y="12.3" width="8" height="1.4" fill="#8db7e6"/></svg>
<div class="t" style="top:313.30px;font-size:7.8px;line-height:12px;color:#fff;left:348.50px;">Show Active</div>
<div class="t" style="top:313.30px;font-size:7.8px;line-height:12px;color:#3a3a3a;left:398.50px;">|</div>
<svg class="b" style="left:406.50px;top:312.40px" width="11.20" height="11.20" viewBox="0 0 16 16"><circle cx="8" cy="8" r="8" fill="#cf5238"/><rect x="3.2" y="6.6" width="9.6" height="2.8" rx="0.6" fill="#fff"/></svg>
<div class="t" style="top:313.30px;font-size:7.8px;line-height:12px;color:#3a3a3a;left:420.00px;">Delete</div>
<svg class="b" style="left:453.60px;top:312.20px" width="11.60" height="11.60" viewBox="0 0 16 16"><circle cx="8" cy="8" r="8" fill="#2b70c8"/><path d="M11.8 8 A3.8 3.8 0 1 1 8 4.2" fill="none" stroke="#fff" stroke-width="2"/><path d="M7.2 1.6 L11 4.3 L7.2 7 Z" fill="#fff"/></svg>
<div class="t" style="top:313.30px;font-size:7.8px;line-height:12px;color:#3a3a3a;left:468.00px;">Restore</div>
<div class="t" style="top:313.30px;font-size:7.8px;line-height:12px;color:#3a3a3a;left:501.00px;">|</div>
<svg class="b" style="left:509.80px;top:311.80px" width="11.80" height="11.60" viewBox="0 0 16 16"><path d="M0.5 0.5 L15.5 0.5 L9.6 7.5 L9.6 15 L6.4 13 L6.4 7.5 Z" fill="#8a8a8a"/><path d="M2.6 1.5 L13.4 1.5 L12.5 2.6 L3.5 2.6 Z" fill="#c9c9c9"/></svg>
<div class="t" style="top:313.30px;font-size:7.8px;line-height:12px;color:#3a3a3a;left:524.00px;">Show Filter Row</div>
<svg class="b" style="left:591.00px;top:312.50px" width="11.60" height="10.80" viewBox="0 0 16 16"><rect x="0.5" y="0.5" width="15" height="15" fill="#fff" stroke="#9aa3ad"/><rect x="0.5" y="0.5" width="15" height="2.6" fill="#3f7fd0"/><rect x="4.6" y="3.1" width="3.6" height="12.4" fill="#bfe0f6" stroke="#5aa0d8" stroke-width="0.6"/><rect x="4.4" y="3" width="0.8" height="12.5" fill="#b4bbc3"/><rect x="8.2" y="3" width="0.8" height="12.5" fill="#b4bbc3"/><rect x="12" y="3" width="0.8" height="12.5" fill="#b4bbc3"/><rect x="0.5" y="6" width="15" height="0.8" fill="#b4bbc3"/><rect x="0.5" y="9" width="15" height="0.8" fill="#b4bbc3"/><rect x="0.5" y="12" width="15" height="0.8" fill="#b4bbc3"/></svg>
<div class="t" style="top:313.30px;font-size:7.8px;line-height:12px;color:#3a3a3a;left:606.00px;">Select All</div>
<svg class="b" style="left:648.00px;top:312.50px" width="11.60" height="10.80" viewBox="0 0 16 16"><rect x="0.5" y="0.5" width="15" height="15" fill="#fff" stroke="#9aa3ad"/><rect x="0.5" y="0.5" width="15" height="2.6" fill="#3f7fd0"/><rect x="4.4" y="3" width="0.8" height="12.5" fill="#b4bbc3"/><rect x="8.2" y="3" width="0.8" height="12.5" fill="#b4bbc3"/><rect x="12" y="3" width="0.8" height="12.5" fill="#b4bbc3"/><rect x="0.5" y="6" width="15" height="0.8" fill="#b4bbc3"/><rect x="0.5" y="9" width="15" height="0.8" fill="#b4bbc3"/><rect x="0.5" y="12" width="15" height="0.8" fill="#b4bbc3"/></svg>
<div class="t" style="top:313.30px;font-size:7.8px;line-height:12px;color:#3a3a3a;left:662.00px;">Deselect</div>
<div class="b" style="left:221.00px;top:327.50px;width:570.00px;height:15.50px;border:1px solid #c9c9c9;box-sizing:border-box;background:#fff;"></div>
<div class="b" style="left:234.00px;top:328.00px;width:1.00px;height:14.50px;background:#c9c9c9;"></div>
<div class="b" style="left:263.50px;top:328.00px;width:1.00px;height:14.50px;background:#c9c9c9;"></div>
<div class="b" style="left:288.00px;top:328.00px;width:1.00px;height:14.50px;background:#c9c9c9;"></div>
<div class="b" style="left:302.50px;top:328.00px;width:1.00px;height:14.50px;background:#c9c9c9;"></div>
<div class="b" style="left:332.00px;top:328.00px;width:1.00px;height:14.50px;background:#c9c9c9;"></div>
<div class="b" style="left:437.00px;top:328.00px;width:1.00px;height:14.50px;background:#c9c9c9;"></div>
<div class="b" style="left:528.00px;top:328.00px;width:1.00px;height:14.50px;background:#c9c9c9;"></div>
<div class="b" style="left:598.00px;top:328.00px;width:1.00px;height:14.50px;background:#c9c9c9;"></div>
<div class="b" style="left:669.00px;top:328.00px;width:1.00px;height:14.50px;background:#c9c9c9;"></div>
<div class="b" style="left:717.00px;top:328.00px;width:1.00px;height:14.50px;background:#c9c9c9;"></div>
<div class="b" style="left:768.00px;top:328.00px;width:1.00px;height:14.50px;background:#c9c9c9;"></div>
<div class="t" style="top:330.20px;font-size:7.8px;line-height:12px;color:#3a3a3a;left:237.50px;">Select</div>
<div class="t" style="top:330.20px;font-size:7.8px;line-height:12px;color:#3a3a3a;left:267.00px;">View</div>
<div class="t" style="top:330.20px;font-size:7.8px;line-height:12px;color:#3a3a3a;left:306.50px;">Doc ID</div>
<div class="t" style="top:330.20px;font-size:7.8px;line-height:12px;color:#3a3a3a;left:335.50px;">Document Name</div>
<div class="t" style="top:330.20px;font-size:7.8px;line-height:12px;color:#3a3a3a;left:441.00px;">Document Description</div>
<div class="t" style="top:330.20px;font-size:7.8px;line-height:12px;color:#3a3a3a;left:532.00px;">Last Change By</div>
<div class="t" style="top:330.20px;font-size:7.8px;line-height:12px;color:#3a3a3a;left:601.50px;">Last Change On</div>
<div class="t" style="top:330.20px;font-size:7.8px;line-height:12px;color:#3a3a3a;left:673.00px;">Added By</div>
<div class="t" style="top:330.20px;font-size:7.8px;line-height:12px;color:#3a3a3a;left:721.00px;">Added On</div>
<div class="b" style="left:221.00px;top:343.00px;width:1.00px;height:102.00px;background:#d4d4d4;"></div>
<svg class="b" style="left:226px;top:348.5px" width="4.5" height="7" viewBox="0 0 5 8"><path d="M0.5 0.5 L4.5 4 L0.5 7.5 Z" fill="#555"/></svg>
<div class="b" style="left:234.00px;top:343.00px;width:1.00px;height:102.00px;background:#d4d4d4;"></div>
<div class="b" style="left:234.50px;top:343.30px;width:556.00px;height:17.00px;background:#dcdcdc;border:1px dotted #7d7d7d;box-sizing:border-box;"></div>
<svg class="b" style="left:241px;top:350.2px" width="5" height="4.5" viewBox="0 0 6 6" preserveAspectRatio="none"><path d="M5.5 0.5 L5.5 5.5 L0.5 5.5 Z" fill="#666"/></svg>
<div class="t" style="top:347.40px;font-size:8.05px;line-height:12px;color:#333;left:251.00px;font-weight:bold;">Documents Attached At: Step Level</div>
<div class="b" style="left:249.00px;top:360.60px;width:541.50px;height:17.10px;background:#e6e6e6;"></div>
<svg class="b" style="left:256.3px;top:367.7px" width="5" height="4.5" viewBox="0 0 6 6" preserveAspectRatio="none"><path d="M5.5 0.5 L5.5 5.5 L0.5 5.5 Z" fill="#666"/></svg>
<div class="t" style="top:365.00px;font-size:8.05px;line-height:12px;color:#333;left:266.00px;font-weight:bold;">Step Number - Name: 1 - Step 1</div>
<div class="b" style="left:248.50px;top:360.60px;width:1.00px;height:84.40px;background:#d4d4d4;"></div>
<div class="b" style="left:249.00px;top:394.00px;width:519.50px;height:1.00px;background:#d4d4d4;"></div>
<div class="b" style="left:263.50px;top:377.70px;width:1.00px;height:16.80px;background:#e0e0e0;"></div>
<div class="b" style="left:288.00px;top:377.70px;width:1.00px;height:16.80px;background:#e0e0e0;"></div>
<div class="b" style="left:302.50px;top:377.70px;width:1.00px;height:16.80px;background:#e0e0e0;"></div>
<div class="b" style="left:332.00px;top:377.70px;width:1.00px;height:16.80px;background:#e0e0e0;"></div>
<div class="b" style="left:437.00px;top:377.70px;width:1.00px;height:16.80px;background:#e0e0e0;"></div>
<div class="b" style="left:528.00px;top:377.70px;width:1.00px;height:16.80px;background:#e0e0e0;"></div>
<div class="b" style="left:598.00px;top:377.70px;width:1.00px;height:16.80px;background:#e0e0e0;"></div>
<div class="b" style="left:669.00px;top:377.70px;width:1.00px;height:16.80px;background:#e0e0e0;"></div>
<div class="b" style="left:717.00px;top:377.70px;width:1.00px;height:16.80px;background:#e0e0e0;"></div>
<div class="b" style="left:768.00px;top:377.70px;width:1.00px;height:16.80px;background:#e0e0e0;"></div>
<div class="b" style="left:252.00px;top:381.40px;width:9.80px;height:9.40px;border:1px solid #c4c4c4;background:#fff;box-sizing:border-box;"></div>
<div class="b" style="left:264.70px;top:378.20px;width:23.50px;height:16.10px;border:1px solid #b9b9b9;background:linear-gradient(#f6f6f6,#e9e9e9);box-sizing:border-box;"></div>
<svg class="b" style="left:270.30px;top:382.10px" width="12.20" height="8.40" viewBox="0 0 16 11"><circle cx="4.3" cy="7.9" r="2.6" fill="none" stroke="#777" stroke-width="1.05"/><circle cx="11.7" cy="7.9" r="2.6" fill="none" stroke="#777" stroke-width="1.05"/><path d="M6.9 7.4 Q8 6.5 9.1 7.4" fill="none" stroke="#777" stroke-width="1"/><path d="M1.9 6.6 L5.4 0.9" fill="none" stroke="#777" stroke-width="1.05" stroke-linecap="round"/><path d="M14.1 6.6 L10.6 0.9" fill="none" stroke="#777" stroke-width="1.05" stroke-linecap="round"/></svg>
<svg class="b" style="left:290.00px;top:380.50px" width="10.90" height="11.40" viewBox="0 0 16 16"><path d="M4.5 0.5 L11.5 0.5 L14.5 3.5 L14.5 15.5 L4.5 15.5 Z" fill="#fdfefd" stroke="#c3cfc6" stroke-width="0.9"/><path d="M11.5 0.5 L11.5 3.5 L14.5 3.5" fill="none" stroke="#c3cfc6" stroke-width="0.8"/><rect x="8.6" y="4.6" width="2.2" height="1.7" fill="#7cc792"/><rect x="11.4" y="4.6" width="2.2" height="1.7" fill="#7cc792"/><rect x="8.6" y="7.2" width="2.2" height="1.7" fill="#7cc792"/><rect x="11.4" y="7.2" width="2.2" height="1.7" fill="#7cc792"/><rect x="8.6" y="9.8" width="2.2" height="1.7" fill="#7cc792"/><rect x="11.4" y="9.8" width="2.2" height="1.7" fill="#7cc792"/><rect x="8.6" y="12.4" width="2.2" height="1.7" fill="#7cc792"/><rect x="11.4" y="12.4" width="2.2" height="1.7" fill="#7cc792"/><rect x="0.3" y="4.6" width="8" height="9.6" fill="#1d7744"/><path d="M2.5 6.8 L6.1 12 M6.1 6.8 L2.5 12" stroke="#fff" stroke-width="1.3"/></svg>
<div class="t" style="top:382.15px;font-size:7.8px;line-height:12px;color:#3a3a3a;right:470.50px;">1</div>
<div class="t" style="top:382.15px;font-size:7.8px;line-height:12px;color:#3a3a3a;left:335.50px;">64 - Workitem template.xlsx</div>
<div class="t" style="top:382.15px;font-size:7.8px;line-height:12px;color:#3a3a3a;left:532.00px;">sunily8</div>
<div class="t" style="top:382.15px;font-size:7.8px;line-height:12px;color:#3a3a3a;left:601.50px;">08/05/2017 2:2...</div>
<div class="b" style="left:676px;top:382.90px;width:21px;height:6.5px;background:#cacaca;filter:blur(2.5px);border-radius:3px"></div>
<div class="t" style="top:382.15px;font-size:7.8px;line-height:12px;color:#3a3a3a;left:721.00px;">08/05/20...</div>
<div class="b" style="left:249.00px;top:410.80px;width:519.50px;height:1.00px;background:#d4d4d4;"></div>
<div class="b" style="left:263.50px;top:394.50px;width:1.00px;height:16.80px;background:#e0e0e0;"></div>
<div class="b" style="left:288.00px;top:394.50px;width:1.00px;height:16.80px;background:#e0e0e0;"></div>
<div class="b" style="left:302.50px;top:394.50px;width:1.00px;height:16.80px;background:#e0e0e0;"></div>
<div class="b" style="left:332.00px;top:394.50px;width:1.00px;height:16.80px;background:#e0e0e0;"></div>
<div class="b" style="left:437.00px;top:394.50px;width:1.00px;height:16.80px;background:#e0e0e0;"></div>
<div class="b" style="left:528.00px;top:394.50px;width:1.00px;height:16.80px;background:#e0e0e0;"></div>
<div class="b" style="left:598.00px;top:394.50px;width:1.00px;height:16.80px;background:#e0e0e0;"></div>
<div class="b" style="left:669.00px;top:394.50px;width:1.00px;height:16.80px;background:#e0e0e0;"></div>
<div class="b" style="left:717.00px;top:394.50px;width:1.00px;height:16.80px;background:#e0e0e0;"></div>
<div class="b" style="left:768.00px;top:394.50px;width:1.00px;height:16.80px;background:#e0e0e0;"></div>
<div class="b" style="left:252.00px;top:398.20px;width:9.80px;height:9.40px;border:1px solid #c4c4c4;background:#fff;box-sizing:border-box;"></div>
<div class="b" style="left:264.70px;top:395.00px;width:23.50px;height:16.10px;border:1px solid #b9b9b9;background:linear-gradient(#f6f6f6,#e9e9e9);box-sizing:border-box;"></div>
<svg class="b" style="left:270.30px;top:398.90px" width="12.20" height="8.40" viewBox="0 0 16 11"><circle cx="4.3" cy="7.9" r="2.6" fill="none" stroke="#777" stroke-width="1.05"/><circle cx="11.7" cy="7.9" r="2.6" fill="none" stroke="#777" stroke-width="1.05"/><path d="M6.9 7.4 Q8 6.5 9.1 7.4" fill="none" stroke="#777" stroke-width="1"/><path d="M1.9 6.6 L5.4 0.9" fill="none" stroke="#777" stroke-width="1.05" stroke-linecap="round"/><path d="M14.1 6.6 L10.6 0.9" fill="none" stroke="#777" stroke-width="1.05" stroke-linecap="round"/></svg>
<svg class="b" style="left:290.00px;top:397.30px" width="10.90" height="11.40" viewBox="0 0 16 16"><path d="M4.5 0.5 L11.5 0.5 L14.5 3.5 L14.5 15.5 L4.5 15.5 Z" fill="#fdfefd" stroke="#c3cfc6" stroke-width="0.9"/><path d="M11.5 0.5 L11.5 3.5 L14.5 3.5" fill="none" stroke="#c3cfc6" stroke-width="0.8"/><rect x="8.6" y="4.6" width="2.2" height="1.7" fill="#7cc792"/><rect x="11.4" y="4.6" width="2.2" height="1.7" fill="#7cc792"/><rect x="8.6" y="7.2" width="2.2" height="1.7" fill="#7cc792"/><rect x="11.4" y="7.2" width="2.2" height="1.7" fill="#7cc792"/><rect x="8.6" y="9.8" width="2.2" height="1.7" fill="#7cc792"/><rect x="11.4" y="9.8" width="2.2" height="1.7" fill="#7cc792"/><rect x="8.6" y="12.4" width="2.2" height="1.7" fill="#7cc792"/><rect x="11.4" y="12.4" width="2.2" height="1.7" fill="#7cc792"/><rect x="0.3" y="4.6" width="8" height="9.6" fill="#1d7744"/><path d="M2.5 6.8 L6.1 12 M6.1 6.8 L2.5 12" stroke="#fff" stroke-width="1.3"/></svg>
<div class="t" style="top:398.95px;font-size:7.8px;line-height:12px;color:#3a3a3a;right:470.50px;">2</div>
<div class="t" style="top:398.95px;font-size:7.8px;line-height:12px;color:#3a3a3a;left:335.50px;">FB60_16dec.xlsx</div>
<div class="t" style="top:398.95px;font-size:7.8px;line-height:12px;color:#3a3a3a;left:532.00px;">sunily8</div>
<div class="t" style="top:398.95px;font-size:7.8px;line-height:12px;color:#3a3a3a;left:601.50px;">08/05/2017 2:2...</div>
<div class="b" style="left:676px;top:399.70px;width:21px;height:6.5px;background:#cacaca;filter:blur(2.5px);border-radius:3px"></div>
<div class="t" style="top:398.95px;font-size:7.8px;line-height:12px;color:#3a3a3a;left:721.00px;">08/05/20...</div>
<div class="b" style="left:249.00px;top:427.60px;width:519.50px;height:1.00px;background:#d4d4d4;"></div>
<div class="b" style="left:263.50px;top:411.30px;width:1.00px;height:16.80px;background:#e0e0e0;"></div>
<div class="b" style="left:288.00px;top:411.30px;width:1.00px;height:16.80px;background:#e0e0e0;"></div>
<div class="b" style="left:302.50px;top:411.30px;width:1.00px;height:16.80px;background:#e0e0e0;"></div>
<div class="b" style="left:332.00px;top:411.30px;width:1.00px;height:16.80px;background:#e0e0e0;"></div>
<div class="b" style="left:437.00px;top:411.30px;width:1.00px;height:16.80px;background:#e0e0e0;"></div>
<div class="b" style="left:528.00px;top:411.30px;width:1.00px;height:16.80px;background:#e0e0e0;"></div>
<div class="b" style="left:598.00px;top:411.30px;width:1.00px;height:16.80px;background:#e0e0e0;"></div>
<div class="b" style="left:669.00px;top:411.30px;width:1.00px;height:16.80px;background:#e0e0e0;"></div>
<div class="b" style="left:717.00px;top:411.30px;width:1.00px;height:16.80px;background:#e0e0e0;"></div>
<div class="b" style="left:768.00px;top:411.30px;width:1.00px;height:16.80px;background:#e0e0e0;"></div>
<div class="b" style="left:252.00px;top:415.00px;width:9.80px;height:9.40px;border:1px solid #c4c4c4;background:#fff;box-sizing:border-box;"></div>
<div class="b" style="left:264.70px;top:411.80px;width:23.50px;height:16.10px;border:1px solid #b9b9b9;background:linear-gradient(#f6f6f6,#e9e9e9);box-sizing:border-box;"></div>
<svg class="b" style="left:270.30px;top:415.70px" width="12.20" height="8.40" viewBox="0 0 16 11"><circle cx="4.3" cy="7.9" r="2.6" fill="none" stroke="#777" stroke-width="1.05"/><circle cx="11.7" cy="7.9" r="2.6" fill="none" stroke="#777" stroke-width="1.05"/><path d="M6.9 7.4 Q8 6.5 9.1 7.4" fill="none" stroke="#777" stroke-width="1"/><path d="M1.9 6.6 L5.4 0.9" fill="none" stroke="#777" stroke-width="1.05" stroke-linecap="round"/><path d="M14.1 6.6 L10.6 0.9" fill="none" stroke="#777" stroke-width="1.05" stroke-linecap="round"/></svg>
<svg class="b" style="left:290.00px;top:414.10px" width="10.90" height="11.40" viewBox="0 0 16 16"><path d="M4.5 0.5 L11.5 0.5 L14.5 3.5 L14.5 15.5 L4.5 15.5 Z" fill="#fdfefd" stroke="#c3cfc6" stroke-width="0.9"/><path d="M11.5 0.5 L11.5 3.5 L14.5 3.5" fill="none" stroke="#c3cfc6" stroke-width="0.8"/><rect x="8.6" y="4.6" width="2.2" height="1.7" fill="#7cc792"/><rect x="11.4" y="4.6" width="2.2" height="1.7" fill="#7cc792"/><rect x="8.6" y="7.2" width="2.2" height="1.7" fill="#7cc792"/><rect x="11.4" y="7.2" width="2.2" height="1.7" fill="#7cc792"/><rect x="8.6" y="9.8" width="2.2" height="1.7" fill="#7cc792"/><rect x="11.4" y="9.8" width="2.2" height="1.7" fill="#7cc792"/><rect x="8.6" y="12.4" width="2.2" height="1.7" fill="#7cc792"/><rect x="11.4" y="12.4" width="2.2" height="1.7" fill="#7cc792"/><rect x="0.3" y="4.6" width="8" height="9.6" fill="#1d7744"/><path d="M2.5 6.8 L6.1 12 M6.1 6.8 L2.5 12" stroke="#fff" stroke-width="1.3"/></svg>
<div class="t" style="top:415.75px;font-size:7.8px;line-height:12px;color:#3a3a3a;right:470.50px;">3</div>
<div class="t" style="top:415.75px;font-size:7.8px;line-height:12px;color:#3a3a3a;left:335.50px;">date format test.xlsx</div>
<div class="t" style="top:415.75px;font-size:7.8px;line-height:12px;color:#3a3a3a;left:532.00px;">sunily8</div>
<div class="t" style="top:415.75px;font-size:7.8px;line-height:12px;color:#3a3a3a;left:601.50px;">08/05/2017 2:2...</div>
<div class="b" style="left:676px;top:416.50px;width:21px;height:6.5px;background:#cacaca;filter:blur(2.5px);border-radius:3px"></div>
<div class="t" style="top:415.75px;font-size:7.8px;line-height:12px;color:#3a3a3a;left:721.00px;">08/05/20...</div>
<div class="b" style="left:234.50px;top:444.50px;width:534.00px;height:1.00px;background:#d4d4d4;"></div>
<div class="b" style="left:263.50px;top:428.10px;width:1.00px;height:16.90px;background:#e0e0e0;"></div>
<div class="b" style="left:288.00px;top:428.10px;width:1.00px;height:16.90px;background:#e0e0e0;"></div>
<div class="b" style="left:302.50px;top:428.10px;width:1.00px;height:16.90px;background:#e0e0e0;"></div>
<div class="b" style="left:332.00px;top:428.10px;width:1.00px;height:16.90px;background:#e0e0e0;"></div>
<div class="b" style="left:437.00px;top:428.10px;width:1.00px;height:16.90px;background:#e0e0e0;"></div>
<div class="b" style="left:528.00px;top:428.10px;width:1.00px;height:16.90px;background:#e0e0e0;"></div>
<div class="b" style="left:598.00px;top:428.10px;width:1.00px;height:16.90px;background:#e0e0e0;"></div>
<div class="b" style="left:669.00px;top:428.10px;width:1.00px;height:16.90px;background:#e0e0e0;"></div>
<div class="b" style="left:717.00px;top:428.10px;width:1.00px;height:16.90px;background:#e0e0e0;"></div>
<div class="b" style="left:768.00px;top:428.10px;width:1.00px;height:16.90px;background:#e0e0e0;"></div>
<div class="b" style="left:252.00px;top:431.85px;width:9.80px;height:9.40px;border:1px solid #c4c4c4;background:#fff;box-sizing:border-box;"></div>
<div class="b" style="left:264.70px;top:428.60px;width:23.50px;height:16.20px;border:1px solid #b9b9b9;background:linear-gradient(#f6f6f6,#e9e9e9);box-sizing:border-box;"></div>
<svg class="b" style="left:270.30px;top:432.55px" width="12.20" height="8.40" viewBox="0 0 16 11"><circle cx="4.3" cy="7.9" r="2.6" fill="none" stroke="#777" stroke-width="1.05"/><circle cx="11.7" cy="7.9" r="2.6" fill="none" stroke="#777" stroke-width="1.05"/><path d="M6.9 7.4 Q8 6.5 9.1 7.4" fill="none" stroke="#777" stroke-width="1"/><path d="M1.9 6.6 L5.4 0.9" fill="none" stroke="#777" stroke-width="1.05" stroke-linecap="round"/><path d="M14.1 6.6 L10.6 0.9" fill="none" stroke="#777" stroke-width="1.05" stroke-linecap="round"/></svg>
<svg class="b" style="left:290.00px;top:432.15px" width="10.90" height="10.70" viewBox="0 0 16 16"><rect x="0.5" y="2" width="15" height="12.5" fill="#f7efd4" stroke="#d8ccA0" stroke-width="0.8"/><path d="M2 4 Q5 1.8 8.2 3.6 Q9.6 6.5 8.4 9.6 Q6 12 3 10.6 Q1.2 7.5 2 4 Z" fill="#b3201c"/><circle cx="4.6" cy="5.6" r="1.4" fill="#f0c428"/><circle cx="11" cy="11" r="3.3" fill="#f2a818"/><circle cx="11" cy="11.2" r="1.4" fill="#2c1c08"/></svg>
<div class="t" style="top:432.60px;font-size:7.8px;line-height:12px;color:#3a3a3a;right:470.50px;">4</div>
<div class="t" style="top:432.60px;font-size:7.8px;line-height:12px;color:#3a3a3a;left:335.50px;">Desktop.png</div>
<div class="t" style="top:432.60px;font-size:7.8px;line-height:12px;color:#3a3a3a;left:532.00px;">sunily8</div>
<div class="t" style="top:432.60px;font-size:7.8px;line-height:12px;color:#3a3a3a;left:601.50px;">08/05/2017 2:2...</div>
<div class="b" style="left:676px;top:433.35px;width:21px;height:6.5px;background:#cacaca;filter:blur(2.5px);border-radius:3px"></div>
<div class="t" style="top:432.60px;font-size:7.8px;line-height:12px;color:#3a3a3a;left:721.00px;">08/05/20...</div>
<div class="b" style="left:667.00px;top:534.20px;width:54.80px;height:16.20px;background:#efefef;border:1px solid #7db2e8;box-shadow:inset 0 0 0 0.6px #b9d8f5;box-sizing:border-box;"></div>
<div class="t" style="top:537.50px;font-size:7.8px;line-height:12px;color:#3a3a3a;left:667.00px;width:54.7px;text-align:center;">Save</div>
<div class="b" style="left:730.00px;top:534.20px;width:55.00px;height:16.20px;background:#efefef;border:1px solid #b9b9b9;box-sizing:border-box;"></div>
<div class="t" style="top:537.50px;font-size:7.8px;line-height:12px;color:#3a3a3a;left:730.00px;width:55px;text-align:center;">Cancel</div>
<svg class="b" style="left:0;top:0" width="800" height="563" viewBox="0 0 800 563"><rect x="504.25" y="228.15" width="156.20" height="59.80" fill="#ffff99" stroke="#0808ff" stroke-width="2.1"/></svg>
<div class="t" style="left:514.40px;top:235.53px;font-size:10.0px;line-height:16px;color:#111;font-weight:bold;font-family:'Liberation Sans',sans-serif;transform:scaleX(1.08);transform-origin:0 0;">Active + Archived</div>
<div class="t" style="left:514.40px;top:250.53px;font-size:10.0px;line-height:16px;color:#111;font-weight:bold;font-family:'Liberation Sans',sans-serif;transform:scaleX(1.08);transform-origin:0 0;">supporting documents are</div>
<div class="t" style="left:514.40px;top:265.54px;font-size:10.0px;line-height:16px;color:#111;font-weight:bold;font-family:'Liberation Sans',sans-serif;transform:scaleX(1.08);transform-origin:0 0;">displayed on 'Show All'</div>
</div>
<svg class="b" style="left:0;top:0" width="800" height="563" viewBox="0 0 800 563"><polyline points="790.5,188.9 792.5,187.8 795.0,191.6 792.4,193.2 795.3,197.5 793.0,199.4 794.1,203.0 792.6,206.1 794.3,208.3 792.8,210.7 795.6,214.1 793.0,216.4 794.2,220.0 792.5,223.0 795.3,225.3 793.3,227.5 795.3,230.3 792.4,234.1 795.7,236.3 793.1,240.2 794.8,244.0 793.1,247.0 795.3,249.8 792.9,251.8 794.1,256.2 792.9,257.9 795.4,262.0 792.9,266.3 794.3,270.6 792.9,274.1 794.1,276.6 792.9,279.0 795.7,280.9 792.3,283.4 794.5,286.3 792.2,288.9 794.4,291.5 792.3,294.3 794.1,295.9 793.0,300.2 794.9,304.3 792.6,308.7 794.8,312.3 792.4,313.9 794.4,317.3 792.8,319.5 794.9,323.9 792.7,326.7 795.5,328.7 792.4,332.7 794.8,335.2 793.3,339.1 794.2,342.8 792.7,344.4 795.6,348.9 793.7,351.2 795.3,354.2 792.8,356.4 795.4,359.9 793.2,363.4 795.2,365.8 793.1,369.5 794.6,371.8 792.9,375.1 795.1,379.5 792.5,383.4 795.0,385.3 793.4,389.3 794.6,391.7 792.6,396.1 795.5,398.7 792.4,401.0 795.2,402.9 792.9,405.1 794.8,407.2 793.7,410.6 795.3,413.1 793.1,415.6 794.1,418.8 792.7,421.5 794.6,423.3 793.0,426.0 794.8,430.4 792.8,432.9 794.9,437.4 793.7,441.1 795.0,445.3 792.2,448.0 794.5,450.0 793.4,453.5 794.9,456.8 793.0,458.8 794.6,463.1 792.1,467.0 795.6,468.9 793.3,471.8 795.6,474.5 793.2,478.5 794.9,480.7 793.1,484.7 795.1,487.4 793.0,489.3 794.5,493.4 793.3,497.2 795.2,499.1 793.0,502.5 795.0,505.7 793.6,508.6 795.1,512.0 792.4,515.7 794.2,517.8 793.6,519.7 794.3,522.6 793.3,526.0 794.3,529.8 792.9,532.8 795.5,534.8 792.3,538.5 795.1,542.9 793.2,547.1 794.5,551.4 793.9,554.4 791.6,556.6 788.5,553.5 786.2,556.2 784.6,554.4 780.3,556.4 778.2,554.7 775.1,556.4 771.0,553.9 766.9,555.7 763.5,554.1 761.2,556.8 758.6,553.7 756.5,555.5 752.6,554.3 748.2,556.3 745.7,554.9 743.7,556.3 740.7,553.5 738.5,555.5 736.9,554.8 734.3,555.9 731.0,554.3 728.1,555.8 725.9,554.9 722.4,556.6 719.7,554.9 716.3,556.3 712.8,554.1 709.1,555.9 707.5,554.0 705.2,555.7 703.7,553.9 701.7,555.8 698.7,553.8 696.6,556.0 694.9,553.5 691.3,555.6 687.6,554.0 684.7,555.3 682.5,554.5 678.7,556.4 675.1,554.3 672.3,556.5 670.0,553.8 667.8,555.6 665.5,554.3 661.2,556.5 657.0,554.2 652.8,556.4 649.3,553.4 645.3,556.4 642.5,553.7 640.0,555.9 638.3,553.5 636.7,555.7 634.1,554.9 632.4,556.4 628.8,554.7 625.6,556.0 621.6,554.6 617.5,556.7 615.7,554.9 614.0,556.6 610.6,553.6 608.2,555.3 604.5,554.3 601.7,555.6 599.3,553.7 596.8,556.8 592.8,554.7 590.0,556.1 587.5,553.8 585.3,555.6 581.4,554.9 579.2,556.5 577.7,554.0 573.8,555.8 571.2,553.6 566.9,555.9 563.3,554.8 559.9,555.7 556.3,553.7 553.7,556.1 549.6,554.5 548.0,555.9 543.8,554.0 539.6,555.9 536.5,553.7 533.1,556.0 531.1,553.6 527.4,555.8 523.6,553.9 520.7,556.7 518.5,554.2 514.5,555.8 512.3,554.2 510.2,556.0 505.8,554.7 501.5,555.7 497.0,553.6 494.2,555.8 492.4,554.3 490.7,556.1 487.1,554.0 484.2,555.8 481.5,553.7 478.7,556.3 475.9,554.3 471.8,556.5 467.8,553.8 464.9,556.0 463.1,554.1 459.4,556.4 456.6,554.0 453.9,556.4 451.8,553.8 449.1,556.2 447.5,553.9 443.6,556.7 441.8,553.9 438.2,556.2 434.2,554.0 429.9,555.9 427.2,553.7 422.7,555.4 420.4,554.8 417.6,556.1 415.0,554.3 411.3,556.7 409.1,553.6 407.0,555.8 403.0,553.8 399.9,555.9 397.3,553.8 393.3,556.2 390.2,554.4 387.6,556.6 385.0,554.3 382.9,555.6 380.5,554.3 377.5,556.1 374.1,554.2 370.0,555.7 365.8,553.7 361.8,555.5 360.3,553.5 358.0,555.7 355.8,553.7 353.8,556.7 351.7,553.5 347.9,556.4 344.0,553.6 340.5,556.2 337.6,553.5 335.3,555.9 332.3,554.5 330.4,556.2 327.2,554.6 323.2,556.2 319.7,553.6 317.0,555.6 313.5,554.7 310.2,556.4 307.7,553.4 304.7,555.6 301.1,553.8 297.0,556.0 293.9,553.7 291.1,556.1 287.1,554.2 284.4,556.2 281.4,553.4 277.5,556.0 275.1,553.9 271.2,555.7 267.1,554.8 264.7,555.6 260.4,553.9 256.6,556.7 253.2,553.8 249.9,556.4 246.4,554.0 244.6,555.3 240.8,553.5 238.1,556.6 234.9,554.3 232.2,556.0 228.7,554.6 225.5,555.3 221.6,553.9 218.8,555.6 220.1,555.1" fill="none" stroke="#1c1c1c" stroke-opacity="0.85" stroke-width="1.9" stroke-linejoin="round" transform="translate(1.4,1.4)"/><polygon points="218.2,188.6 221.3,187.2 223.6,188.3 225.1,187.5 226.7,188.8 228.4,187.1 232.3,188.9 236.2,187.3 238.3,188.0 240.5,186.4 243.4,189.0 246.2,187.6 248.2,189.0 250.4,186.7 252.5,189.2 254.5,186.7 258.2,189.1 262.2,187.2 265.5,188.5 267.0,186.6 269.9,189.3 273.1,186.7 275.6,189.2 278.3,187.4 281.5,189.0 285.0,187.0 288.1,188.3 290.0,187.6 293.4,188.4 295.8,187.4 298.3,188.9 301.8,186.4 304.3,188.7 308.2,187.2 310.2,188.5 313.1,187.6 315.6,188.7 319.4,186.5 322.4,188.2 326.2,186.4 329.6,188.7 331.3,187.4 332.8,188.5 335.1,187.6 336.9,188.4 338.3,186.3 340.1,188.6 342.4,187.2 346.4,188.8 348.0,187.2 350.1,189.2 351.5,186.3 353.3,188.1 356.0,186.2 359.2,188.6 361.0,186.5 364.5,188.6 368.0,186.2 371.5,189.2 373.4,186.7 374.9,188.3 376.9,186.5 379.5,189.3 383.4,186.9 385.3,188.5 388.4,186.3 391.0,189.0 392.6,186.6 396.0,189.1 397.9,186.4 401.3,189.4 403.8,186.3 405.6,188.4 409.3,186.4 412.9,189.4 415.2,186.7 416.6,189.4 419.3,186.3 423.0,189.2 425.0,187.0 428.0,188.6 429.7,186.3 432.3,188.9 434.7,186.3 437.5,188.1 440.0,187.6 443.5,188.5 446.8,186.7 449.5,188.9 451.2,186.7 453.3,189.1 456.1,186.5 458.7,189.0 461.4,186.5 464.2,188.8 467.4,186.3 469.4,188.9 473.0,187.2 475.5,188.4 477.1,186.6 480.8,188.5 483.9,187.2 487.9,188.5 490.3,186.8 493.8,188.5 496.6,186.9 498.8,188.2 501.6,187.5 503.9,189.0 505.4,186.2 509.3,188.4 510.8,186.4 512.5,188.8 516.0,187.0 519.8,188.9 521.4,187.3 523.9,188.4 527.0,187.4 530.6,188.4 533.2,186.9 537.0,188.6 539.7,187.6 541.5,188.3 543.7,187.0 545.9,188.8 548.1,187.3 549.6,189.1 551.4,186.8 553.1,189.2 555.8,186.4 558.5,189.1 560.7,186.4 563.8,188.7 565.3,187.6 568.6,188.6 570.2,186.4 573.4,188.6 575.5,186.8 578.0,188.6 582.0,186.7 585.9,188.6 587.3,186.9 590.0,188.5 591.3,187.6 593.8,188.0 595.9,187.1 598.7,189.1 602.0,186.3 604.2,189.4 607.5,187.4 611.0,189.3 614.3,186.4 617.1,188.8 620.6,186.4 624.3,189.0 626.3,187.3 628.6,188.4 631.4,186.6 634.6,188.1 638.1,186.5 640.8,188.2 644.2,187.6 646.2,189.1 649.5,186.2 651.9,188.8 655.3,186.6 656.9,188.4 660.2,187.0 661.6,188.3 664.8,186.5 666.9,188.9 669.5,187.2 671.4,189.4 672.8,186.8 676.7,188.8 678.7,186.3 681.6,188.4 685.4,187.2 688.1,189.3 690.1,186.3 691.6,188.3 694.1,187.0 696.4,188.6 697.8,186.5 699.5,189.3 703.2,187.0 705.6,189.4 707.9,186.8 709.4,188.4 711.6,186.3 713.6,188.9 716.0,186.2 719.5,189.0 723.3,186.7 724.9,189.1 728.2,186.6 729.7,189.3 732.3,186.9 735.6,189.4 738.7,187.0 741.1,188.5 743.1,186.3 745.0,189.3 747.6,187.2 749.2,188.1 751.2,187.0 754.9,189.1 757.4,186.7 759.6,188.3 763.5,187.2 766.6,189.2 768.6,187.0 771.2,189.3 774.9,187.6 778.1,189.3 781.0,187.3 784.8,189.2 788.7,187.6 790.5,188.9 792.5,187.8 795.0,191.6 792.4,193.2 795.3,197.5 793.0,199.4 794.1,203.0 792.6,206.1 794.3,208.3 792.8,210.7 795.6,214.1 793.0,216.4 794.2,220.0 792.5,223.0 795.3,225.3 793.3,227.5 795.3,230.3 792.4,234.1 795.7,236.3 793.1,240.2 794.8,244.0 793.1,247.0 795.3,249.8 792.9,251.8 794.1,256.2 792.9,257.9 795.4,262.0 792.9,266.3 794.3,270.6 792.9,274.1 794.1,276.6 792.9,279.0 795.7,280.9 792.3,283.4 794.5,286.3 792.2,288.9 794.4,291.5 792.3,294.3 794.1,295.9 793.0,300.2 794.9,304.3 792.6,308.7 794.8,312.3 792.4,313.9 794.4,317.3 792.8,319.5 794.9,323.9 792.7,326.7 795.5,328.7 792.4,332.7 794.8,335.2 793.3,339.1 794.2,342.8 792.7,344.4 795.6,348.9 793.7,351.2 795.3,354.2 792.8,356.4 795.4,359.9 793.2,363.4 795.2,365.8 793.1,369.5 794.6,371.8 792.9,375.1 795.1,379.5 792.5,383.4 795.0,385.3 793.4,389.3 794.6,391.7 792.6,396.1 795.5,398.7 792.4,401.0 795.2,402.9 792.9,405.1 794.8,407.2 793.7,410.6 795.3,413.1 793.1,415.6 794.1,418.8 792.7,421.5 794.6,423.3 793.0,426.0 794.8,430.4 792.8,432.9 794.9,437.4 793.7,441.1 795.0,445.3 792.2,448.0 794.5,450.0 793.4,453.5 794.9,456.8 793.0,458.8 794.6,463.1 792.1,467.0 795.6,468.9 793.3,471.8 795.6,474.5 793.2,478.5 794.9,480.7 793.1,484.7 795.1,487.4 793.0,489.3 794.5,493.4 793.3,497.2 795.2,499.1 793.0,502.5 795.0,505.7 793.6,508.6 795.1,512.0 792.4,515.7 794.2,517.8 793.6,519.7 794.3,522.6 793.3,526.0 794.3,529.8 792.9,532.8 795.5,534.8 792.3,538.5 795.1,542.9 793.2,547.1 794.5,551.4 793.9,554.4 791.6,556.6 788.5,553.5 786.2,556.2 784.6,554.4 780.3,556.4 778.2,554.7 775.1,556.4 771.0,553.9 766.9,555.7 763.5,554.1 761.2,556.8 758.6,553.7 756.5,555.5 752.6,554.3 748.2,556.3 745.7,554.9 743.7,556.3 740.7,553.5 738.5,555.5 736.9,554.8 734.3,555.9 731.0,554.3 728.1,555.8 725.9,554.9 722.4,556.6 719.7,554.9 716.3,556.3 712.8,554.1 709.1,555.9 707.5,554.0 705.2,555.7 703.7,553.9 701.7,555.8 698.7,553.8 696.6,556.0 694.9,553.5 691.3,555.6 687.6,554.0 684.7,555.3 682.5,554.5 678.7,556.4 675.1,554.3 672.3,556.5 670.0,553.8 667.8,555.6 665.5,554.3 661.2,556.5 657.0,554.2 652.8,556.4 649.3,553.4 645.3,556.4 642.5,553.7 640.0,555.9 638.3,553.5 636.7,555.7 634.1,554.9 632.4,556.4 628.8,554.7 625.6,556.0 621.6,554.6 617.5,556.7 615.7,554.9 614.0,556.6 610.6,553.6 608.2,555.3 604.5,554.3 601.7,555.6 599.3,553.7 596.8,556.8 592.8,554.7 590.0,556.1 587.5,553.8 585.3,555.6 581.4,554.9 579.2,556.5 577.7,554.0 573.8,555.8 571.2,553.6 566.9,555.9 563.3,554.8 559.9,555.7 556.3,553.7 553.7,556.1 549.6,554.5 548.0,555.9 543.8,554.0 539.6,555.9 536.5,553.7 533.1,556.0 531.1,553.6 527.4,555.8 523.6,553.9 520.7,556.7 518.5,554.2 514.5,555.8 512.3,554.2 510.2,556.0 505.8,554.7 501.5,555.7 497.0,553.6 494.2,555.8 492.4,554.3 490.7,556.1 487.1,554.0 484.2,555.8 481.5,553.7 478.7,556.3 475.9,554.3 471.8,556.5 467.8,553.8 464.9,556.0 463.1,554.1 459.4,556.4 456.6,554.0 453.9,556.4 451.8,553.8 449.1,556.2 447.5,553.9 443.6,556.7 441.8,553.9 438.2,556.2 434.2,554.0 429.9,555.9 427.2,553.7 422.7,555.4 420.4,554.8 417.6,556.1 415.0,554.3 411.3,556.7 409.1,553.6 407.0,555.8 403.0,553.8 399.9,555.9 397.3,553.8 393.3,556.2 390.2,554.4 387.6,556.6 385.0,554.3 382.9,555.6 380.5,554.3 377.5,556.1 374.1,554.2 370.0,555.7 365.8,553.7 361.8,555.5 360.3,553.5 358.0,555.7 355.8,553.7 353.8,556.7 351.7,553.5 347.9,556.4 344.0,553.6 340.5,556.2 337.6,553.5 335.3,555.9 332.3,554.5 330.4,556.2 327.2,554.6 323.2,556.2 319.7,553.6 317.0,555.6 313.5,554.7 310.2,556.4 307.7,553.4 304.7,555.6 301.1,553.8 297.0,556.0 293.9,553.7 291.1,556.1 287.1,554.2 284.4,556.2 281.4,553.4 277.5,556.0 275.1,553.9 271.2,555.7 267.1,554.8 264.7,555.6 260.4,553.9 256.6,556.7 253.2,553.8 249.9,556.4 246.4,554.0 244.6,555.3 240.8,553.5 238.1,556.6 234.9,554.3 232.2,556.0 228.7,554.6 225.5,555.3 221.6,553.9 218.8,555.6 220.1,555.1 217.8,553.2 219.1,550.9 217.6,549.8 218.8,548.6 218.0,545.9 219.1,543.5 217.5,542.1 220.0,539.7 216.7,538.5 220.1,536.6 217.7,533.7 219.7,532.7 217.2,531.5 220.0,530.1 217.1,529.0 219.7,527.1 217.1,524.6 219.4,522.3 216.3,519.8 218.5,517.7 216.6,514.8 219.6,513.1 216.8,510.5 220.0,508.6 216.8,506.3 218.5,503.7 217.0,502.1 218.8,499.5 216.5,496.9 219.2,494.8 216.6,492.2 218.9,490.5 217.3,487.9 219.1,485.1 216.9,482.8 219.9,481.3 217.5,479.4 219.1,476.8 216.4,474.1 219.6,472.1 217.3,470.7 219.6,469.0 218.0,467.0 218.5,464.0 216.5,461.8 219.3,459.6 217.6,458.6 219.5,455.9 216.5,454.3 219.9,451.5 217.9,448.6 218.5,447.2 216.8,446.1 220.1,444.2 216.8,443.0 220.1,441.8 216.7,439.7 219.4,437.3 216.2,436.0 218.9,434.6 216.3,432.9 218.9,430.2 216.7,427.8 219.0,426.7 216.7,423.8 218.7,421.7 217.2,420.0 219.0,418.1 217.7,416.8 218.5,414.4 217.3,411.6 220.0,408.9 217.5,407.0 219.7,404.3 216.4,402.6 219.0,400.4 216.6,399.3 220.0,398.0 217.4,396.2 219.3,393.5 217.2,391.5 218.8,390.3 216.7,387.5 219.2,385.6 217.1,384.2 218.8,381.2 217.6,379.7 219.2,377.2 216.5,376.2 218.8,374.9 217.3,372.8 219.1,370.1 217.3,368.8 218.5,366.4 216.7,365.2 219.1,363.6 216.5,361.2 218.9,359.8 217.7,358.0 219.3,355.4 217.8,352.7 219.5,349.9 217.3,348.4 219.0,346.7 217.6,344.5 219.5,342.6 216.5,340.2 219.8,338.6 217.5,336.1 219.5,333.2 217.8,331.2 219.1,328.3 217.2,327.1 218.9,326.0 217.6,324.6 219.5,322.5 216.4,321.2 219.0,320.1 217.2,318.1 219.0,316.3 217.4,313.7 219.0,311.2 217.1,308.3 219.5,305.7 216.5,302.8 219.3,301.4 216.5,298.4 218.7,295.8 216.3,293.8 219.4,292.3 217.8,290.6 218.6,288.7 216.2,287.4 219.7,284.6 217.6,281.9 219.2,279.6 216.8,278.1 219.2,275.8 216.3,274.0 219.7,272.4 216.3,270.2 219.5,268.7 217.4,267.3 219.4,265.8 217.5,264.3 219.7,261.6 217.3,259.3 219.6,257.4 217.2,255.5 219.5,254.1 217.6,251.9 219.1,249.2 217.2,247.2 219.9,245.6 216.4,244.5 219.3,243.4 217.4,240.9 219.8,238.0 217.1,236.4 220.0,234.1 216.6,232.1 219.5,229.6 216.3,227.2 218.8,224.5 216.9,222.4 219.4,220.2 216.7,217.5 219.4,215.6 217.1,214.0 219.3,212.3 216.9,209.6 219.2,208.2 217.8,206.1 219.3,203.3 216.3,200.6 218.8,198.8 216.8,197.7 219.9,194.9 216.9,191.9 219.3,189.6" fill="none" stroke="#1b78aa" stroke-width="1.3" stroke-linejoin="round"/></svg>
<svg class="b" style="left:0;top:0" width="800" height="563" viewBox="0 0 800 563"><circle cx="171" cy="173" r="3" fill="#ff0000"/><path d="M170.7 172 L170.7 316.3 L208 316.3" fill="none" stroke="#ff0000" stroke-width="1.5"/><path d="M219.5 316.3 L203.5 311.8 L206.5 316.3 L203.5 320.8 Z" fill="#ff0000"/></svg>
</div></body></html>
